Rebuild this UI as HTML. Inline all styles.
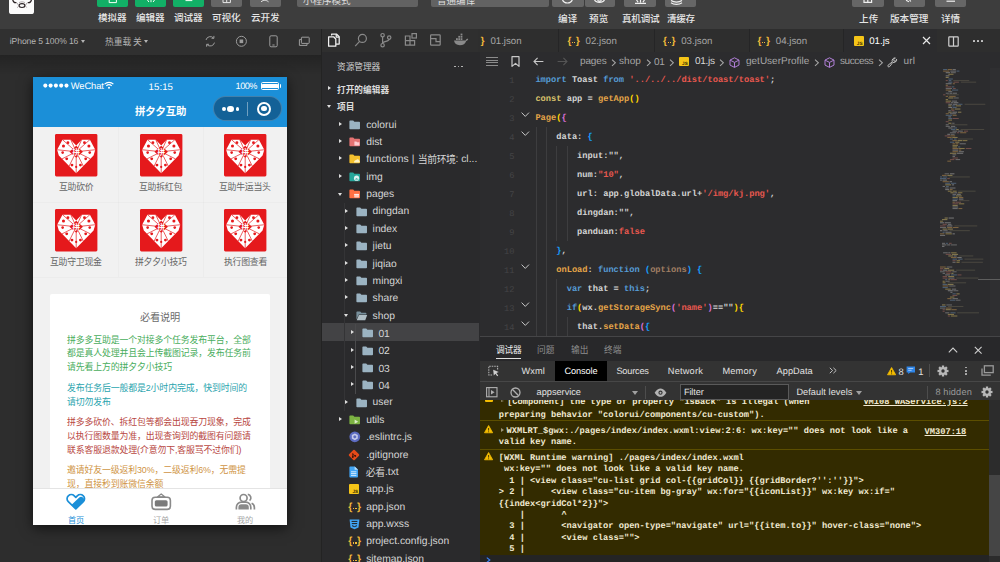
<!DOCTYPE html>
<html lang="zh"><head><meta charset="utf-8"><title>WeChat DevTools</title>
<style>
html,body{margin:0;padding:0;background:#2d2d2d;}
body{width:1000px;height:562px;overflow:hidden;position:relative;font-family:"Liberation Sans",sans-serif;}
#app{position:absolute;left:0;top:0;width:1000px;height:562px;overflow:hidden;background:#2d2d2d;}
#app div,#app span,#app svg{position:absolute;box-sizing:border-box;}
.t{font-family:"Liberation Sans",sans-serif;white-space:pre;text-rendering:geometricPrecision;}
.m{font-family:"Liberation Mono",monospace;white-space:pre;text-rendering:geometricPrecision;}
.c{overflow:visible;}
svg text{font-family:"Liberation Sans","Noto Sans CJK SC",sans-serif;}
</style></head><body><div id="app">
<div style="left:0px;top:0px;width:1000px;height:28.5px;background:#3d3d3d;"></div>
<div style="left:8.9px;top:-8px;width:25.3px;height:21.6px;background:#fbfbfb;border-radius:2.6px;"></div>
<svg class="c" style="left:11.6px;top:0px;width:20px;height:12px;" viewBox="0 0 20 12"><g fill="none" stroke="#2a2224" stroke-width="1.2" stroke-linecap="round"><path d="M.8 0c.4 1.800 1.600 2.800 3.200 2.600M19.400 0c-.4 1.800-1.600 2.800-3.200 2.600"/><ellipse cx="10" cy="5.600" rx="2.900" ry="1.900"/></g><g fill="none" stroke="#8d8488" stroke-width=".7" stroke-linecap="round"><path d="M5.200 3.200l1.800 2.800M14.800 3.200l-1.600 2.600M5.600 7.400l.8-1M14.400 7.200l-.6-.8M7.400 2.400c1.600-.8 3.600-.8 5.200 0"/></g></svg>
<div style="left:96.8px;top:-12px;width:31.7px;height:18.8px;background:#12b066;border-radius:2px;"></div>
<div style="left:134.8px;top:-12px;width:31.7px;height:18.8px;background:#12b066;border-radius:2px;"></div>
<div style="left:172.8px;top:-12px;width:31.7px;height:18.8px;background:#12b066;border-radius:2px;"></div>
<div style="left:210.8px;top:-12px;width:31.7px;height:18.8px;background:#666666;border-radius:2px;"></div>
<div style="left:249.6px;top:-12px;width:31.7px;height:18.8px;background:#666666;border-radius:2px;"></div>
<svg class="c" style="left:96.8px;top:0px;width:190px;height:7px;" viewBox="0 0 190 7"><g fill="none" stroke="#f4fff8" stroke-width="1"><path d="M12.2 0v2.6h7.2V0"/><path d="M50.5 0l1.400 2M54 0v2.200M57.500 0l-1.400 2"/><path d="M88.5 .6h6.8"/><path d="M126 0v2.600h7.400V0M129.700 0v2.600" stroke="#e8e8e8"/><path d="M164 1.800c2.500-2 5-2 7.500 0" stroke="#e8e8e8"/></g></svg>
<svg class="c" style="left:98.35px;top:11.46px;width:29.5px;height:12.48px;fill:#e6e6e6;" viewBox="0 -1030 3072.92 1300" role="img" aria-label="模拟器"><text x="-5.21" y="0" font-size="1000" font-weight="500" letter-spacing="-10.4">模拟器</text></svg>
<svg class="c" style="left:136.35px;top:11.46px;width:29.5px;height:12.48px;fill:#e6e6e6;" viewBox="0 -1030 3072.92 1300" role="img" aria-label="编辑器"><text x="-5.21" y="0" font-size="1000" font-weight="500" letter-spacing="-10.4">编辑器</text></svg>
<svg class="c" style="left:174.35px;top:11.46px;width:29.5px;height:12.48px;fill:#e6e6e6;" viewBox="0 -1030 3072.92 1300" role="img" aria-label="调试器"><text x="-5.21" y="0" font-size="1000" font-weight="500" letter-spacing="-10.4">调试器</text></svg>
<svg class="c" style="left:212.35px;top:11.46px;width:29.5px;height:12.48px;fill:#e6e6e6;" viewBox="0 -1030 3072.92 1300" role="img" aria-label="可视化"><text x="-5.21" y="0" font-size="1000" font-weight="500" letter-spacing="-10.4">可视化</text></svg>
<svg class="c" style="left:251.35px;top:11.46px;width:29.5px;height:12.48px;fill:#e6e6e6;" viewBox="0 -1030 3072.92 1300" role="img" aria-label="云开发"><text x="-5.21" y="0" font-size="1000" font-weight="500" letter-spacing="-10.4">云开发</text></svg>
<div style="left:297px;top:-12px;width:121px;height:18.8px;background:#626262;border-radius:2px;"></div>
<div style="left:431px;top:-12px;width:118px;height:18.8px;background:#626262;border-radius:2px;"></div>
<svg class="c" style="left:302.5px;top:-6.04px;width:48.5px;height:12.48px;fill:#dcdcdc;" viewBox="0 -1030 5052.08 1300" role="img" aria-label="小程序模式"><text x="-5.21" y="0" font-size="1000" letter-spacing="-10.4">小程序模式</text></svg>
<svg class="c" style="left:437px;top:-6.04px;width:39px;height:12.48px;fill:#dcdcdc;" viewBox="0 -1030 4062.5 1300" role="img" aria-label="普通编译"><text x="-5.21" y="0" font-size="1000" letter-spacing="-10.4">普通编译</text></svg>
<div style="left:551.5px;top:-12px;width:32.5px;height:18.8px;background:#666666;border-radius:2px;"></div>
<div style="left:584.6px;top:-12px;width:30.6px;height:18.8px;background:#666666;border-radius:2px;"></div>
<div style="left:624px;top:-12px;width:31.6px;height:18.8px;background:#666666;border-radius:2px;"></div>
<div style="left:665px;top:-12px;width:31.2px;height:18.8px;background:#666666;border-radius:2px;"></div>
<div style="left:852px;top:-12px;width:32px;height:18.8px;background:#666666;border-radius:2px;"></div>
<div style="left:894px;top:-12px;width:31.2px;height:18.8px;background:#666666;border-radius:2px;"></div>
<div style="left:935px;top:-12px;width:31.2px;height:18.8px;background:#666666;border-radius:2px;"></div>
<svg class="c" style="left:551px;top:0px;width:420px;height:7px;" viewBox="0 0 420 7"><g fill="none" stroke="#f0f0f0" stroke-width="1.2"><path d="M11.5 0c1.8 4 8 4 9.8 0"/><path d="M43.5 0c2 3.2 8 3.2 10 0M46.5 0c1 1.6 3 1.6 4 0"/><path d="M85.5 0l1.6 2.2M89.5 0v2.6M93.5 0l-1.6 2.2M84 3.4h11"/><path d="M120 .4c3 2.2 8 2.2 11 0M120 2.8c3 2.2 8 2.2 11 0"/><path d="M313 0v2.4h7.6V0M316.8 0v2.4"/><path d="M355 .3l3 1.5M358.6 0l1.2 1.5"/><path d="M395.5 1.2h8.5"/></g></svg>
<svg class="c" style="left:557.5px;top:11.66px;width:20.4px;height:12.48px;fill:#e6e6e6;" viewBox="0 -1030 2125 1300" role="img" aria-label="编译"><text x="5.21" y="0" font-size="1000" font-weight="500" letter-spacing="10.4">编译</text></svg>
<svg class="c" style="left:589.2px;top:11.66px;width:20.4px;height:12.48px;fill:#e6e6e6;" viewBox="0 -1030 2125 1300" role="img" aria-label="预览"><text x="5.21" y="0" font-size="1000" font-weight="500" letter-spacing="10.4">预览</text></svg>
<svg class="c" style="left:621.6px;top:11.66px;width:38.6px;height:12.48px;fill:#e6e6e6;" viewBox="0 -1030 4020.83 1300" role="img" aria-label="真机调试"><text x="-10.42" y="0" font-size="1000" font-weight="500" letter-spacing="-20.8">真机调试</text></svg>
<svg class="c" style="left:667.27px;top:11.66px;width:29.05px;height:12.48px;fill:#e6e6e6;" viewBox="0 -1030 3026.04 1300" role="img" aria-label="清缓存"><text x="-13.02" y="0" font-size="1000" font-weight="500" letter-spacing="-26">清缓存</text></svg>
<svg class="c" style="left:859.3px;top:11.66px;width:20.4px;height:12.48px;fill:#e6e6e6;" viewBox="0 -1030 2125 1300" role="img" aria-label="上传"><text x="5.21" y="0" font-size="1000" font-weight="500" letter-spacing="10.4">上传</text></svg>
<svg class="c" style="left:890.1px;top:11.66px;width:39.4px;height:12.48px;fill:#e6e6e6;" viewBox="0 -1030 4104.17 1300" role="img" aria-label="版本管理"><text x="0" y="0" font-size="1000" font-weight="500">版本管理</text></svg>
<svg class="c" style="left:941px;top:11.66px;width:20.2px;height:12.48px;fill:#e6e6e6;" viewBox="0 -1030 2104.17 1300" role="img" aria-label="详情"><text x="0" y="0" font-size="1000" font-weight="500">详情</text></svg>
<div style="left:0px;top:28.5px;width:1000px;height:23.7px;background:#2f2f2f;"></div>
<div style="left:0px;top:28.5px;width:321px;height:26px;background:#303030;"></div>
<span class="t" style="left:9.8px;top:35px;font-size:8.6px;line-height:12px;color:#b4b4b4;letter-spacing:-0.11px;">iPhone 5 100% 16</span>
<div style="left:81px;top:40.4px;width:0;height:0;border-left:2.4px solid transparent;border-right:2.4px solid transparent;border-top:3px solid #b4b4b4"></div>
<svg class="c" style="left:104.8px;top:35.88px;width:27.4px;height:11.44px;fill:#b4b4b4;" viewBox="0 -1030 3113.64 1300" role="img" aria-label="热重载"><text x="0" y="0" font-size="1000">热重载</text></svg>
<svg class="c" style="left:133px;top:35.88px;width:9.8px;height:11.44px;fill:#b4b4b4;" viewBox="0 -1030 1113.64 1300" role="img" aria-label="关"><text x="0" y="0" font-size="1000">关</text></svg>
<div style="left:144px;top:40.4px;width:0;height:0;border-left:2.4px solid transparent;border-right:2.4px solid transparent;border-top:3px solid #b4b4b4"></div>
<svg class="c" style="left:203px;top:33.6px;width:110px;height:15px;" viewBox="0 0 110 15"><g fill="none" stroke="#9c9c9c" stroke-width="1"><path d="M3 6a4.400 4.400 0 0 1 7.600-1.900M11.500 8.600a4.400 4.400 0 0 1-7.600 1.900"/><path d="M10.900 1.900v2.400H8.500M3.600 12.700v-2.400H6"/><circle cx="38.400" cy="7.300" r="5"/><rect x="66.800" y="1.800" width="7.400" height="11" rx="1.300"/><path d="M69.400 11h2.200"/><path d="M98.400 5.600h-2v5.800h7.600V9.800"/><rect x="98.400" y="3.200" width="7.800" height="6.200" rx=".6"/></g><rect x="36.600" y="5.500" width="3.600" height="3.600" fill="#9c9c9c"/></svg>
<div style="left:320.8px;top:28.5px;width:1.2px;height:534px;background:#232323;"></div>
<div style="left:0px;top:54.5px;width:320.8px;height:20px;background:linear-gradient(rgba(0,0,0,.22),rgba(0,0,0,0));"></div>
<div style="left:33.2px;top:76.6px;width:254px;height:448.8px;background:#f1f1f1;box-shadow:0 3px 12px rgba(0,0,0,.62);"></div>
<div style="left:33.2px;top:76.6px;width:254px;height:50.5px;background:#1b8fd8;"></div>
<svg class="c" style="left:42.6px;top:83.3px;width:27px;height:5.2px;" viewBox="0 0 27 5.2"><circle cx="2.3" cy="2.600" r="2.050" fill="#fff"/><circle cx="7.6" cy="2.600" r="2.050" fill="#fff"/><circle cx="12.899999999999999" cy="2.600" r="2.050" fill="#fff"/><circle cx="18.2" cy="2.600" r="2.050" fill="#fff"/><circle cx="23.5" cy="2.600" r="2.050" fill="#fff"/></svg>
<span class="t" style="left:70.8px;top:79px;font-size:9.4px;line-height:13px;color:#fff;letter-spacing:-0.13px;">WeChat</span>
<svg class="c" style="left:104.4px;top:81.4px;width:10px;height:8px;" viewBox="0 0 10 8"><g fill="none" stroke="#fff" stroke-width="1.15"><path d="M.6 3.1a6.3 6.3 0 0 1 8.800 0M2.300 4.900a3.900 3.900 0 0 1 5.400 0"/></g><circle cx="5" cy="6.700" r="1" fill="#fff"/></svg>
<span class="t" style="left:148.55px;top:81px;font-size:9.6px;line-height:13px;color:#fff;letter-spacing:0.1px;">15:15</span>
<span class="t" style="left:235.6px;top:80px;font-size:9.2px;line-height:13px;color:#fff;letter-spacing:-0.53px;">100%</span>
<div style="left:260.6px;top:82.2px;width:18.6px;height:7.6px;border:1px solid #fff;border-radius:1.6px;"></div>
<div style="left:262px;top:83.6px;width:15.8px;height:4.8px;background:#fff;border-radius:.6px;"></div>
<div style="left:279.8px;top:84.4px;width:1.4px;height:3.2px;background:#fff;border-radius:0 1px 1px 0;"></div>
<svg class="c" style="left:134.65px;top:104.34px;width:52.5px;height:13.52px;fill:#fff;" viewBox="0 -1030 5048.08 1300" role="img" aria-label="拼夕夕互助"><text x="-4.81" y="0" font-size="1000" font-weight="700" letter-spacing="-9.6">拼夕夕互助</text></svg>
<div style="left:213.2px;top:96.4px;width:69.2px;height:24.8px;background:rgba(14,60,100,.56);border-radius:12.4px;border:0.6px solid rgba(255,255,255,.2);"></div>
<div style="left:246.6px;top:101.6px;width:0.7px;height:14.6px;background:rgba(255,255,255,.4);"></div>
<div style="left:221.8px;top:107px;width:3.8px;height:3.8px;background:#fff;border-radius:50%;"></div>
<div style="left:227.4px;top:105.6px;width:6.6px;height:6.6px;background:#fff;border-radius:50%;"></div>
<div style="left:235.6px;top:107px;width:3.8px;height:3.8px;background:#fff;border-radius:50%;"></div>
<div style="left:256.9px;top:101.8px;width:14.2px;height:14.2px;border:2.5px solid #fff;border-radius:50%;"></div>
<div style="left:261.4px;top:106.3px;width:5.2px;height:5.2px;background:#fff;border-radius:50%;"></div>
<div style="left:117.87px;top:127.2px;width:0.6px;height:150px;background:rgba(0,0,0,.018);"></div>
<div style="left:202.53px;top:127.2px;width:0.6px;height:150px;background:rgba(0,0,0,.018);"></div>
<div style="left:33.2px;top:202px;width:254px;height:0.6px;background:rgba(0,0,0,.018);"></div>
<div style="left:33.2px;top:277px;width:254px;height:0.6px;background:rgba(0,0,0,.018);"></div>
<svg class="c" style="left:54.93px;top:133.8px;width:42.4px;height:42.4px;" viewBox="0 0 42 42"><rect width="42" height="42" rx="1.400" fill="#e5191c"/><polygon points="2.1,15.6 7.4,5.6 15.6,5.6 21,11.4 26.4,5.6 34.6,5.6 39.9,15.6 38.2,21.4 21,39 3.8,21.4" fill="#fff"/><path d="M21 17.6L2.1 15.6M21 17.6L7.4 5.6M21 17.6L15.6 5.6M21 17.6L26.4 5.6M21 17.6L34.6 5.6M21 17.6L39.9 15.6M21 17.6L35 24.6M21 17.6L28 31.8M21 17.6L21 39M21 17.6L14 31.8M21 17.6L7 24.6" stroke="#e5191c" stroke-width=".7" fill="none"/><g fill="#e5191c"><circle cx="8.4" cy="11.8" r="1.5"/><circle cx="12.8" cy="8.6" r="1.4"/><circle cx="29.2" cy="8.6" r="1.4"/><circle cx="33.6" cy="11.8" r="1.5"/><circle cx="7.6" cy="18.4" r="1.3"/><circle cx="34.4" cy="18.4" r="1.3"/><circle cx="11.6" cy="24.6" r="1.4"/><circle cx="30.4" cy="24.6" r="1.4"/><circle cx="16.8" cy="30.8" r="1.4"/><circle cx="25.2" cy="30.8" r="1.4"/><circle cx="21" cy="32.6" r="1.1"/><polygon points="21,11.700000000000001 27.7,17.6 21,23.5 14.3,17.6"/></g><text x="17.1" y="20.6" font-size="7.8" font-weight="700" fill="#fff">拼</text></svg>
<svg class="c" style="left:58.71px;top:180.72px;width:35.64px;height:11.57px;fill:#666;" viewBox="0 -1030 4004.49 1300" role="img" aria-label="互助砍价"><text x="-13.48" y="0" font-size="1000" letter-spacing="-27">互助砍价</text></svg>
<svg class="c" style="left:139.6px;top:133.8px;width:42.4px;height:42.4px;" viewBox="0 0 42 42"><rect width="42" height="42" rx="1.400" fill="#e5191c"/><polygon points="2.1,15.6 7.4,5.6 15.6,5.6 21,11.4 26.4,5.6 34.6,5.6 39.9,15.6 38.2,21.4 21,39 3.8,21.4" fill="#fff"/><path d="M21 17.6L2.1 15.6M21 17.6L7.4 5.6M21 17.6L15.6 5.6M21 17.6L26.4 5.6M21 17.6L34.6 5.6M21 17.6L39.9 15.6M21 17.6L35 24.6M21 17.6L28 31.8M21 17.6L21 39M21 17.6L14 31.8M21 17.6L7 24.6" stroke="#e5191c" stroke-width=".7" fill="none"/><g fill="#e5191c"><circle cx="8.4" cy="11.8" r="1.5"/><circle cx="12.8" cy="8.6" r="1.4"/><circle cx="29.2" cy="8.6" r="1.4"/><circle cx="33.6" cy="11.8" r="1.5"/><circle cx="7.6" cy="18.4" r="1.3"/><circle cx="34.4" cy="18.4" r="1.3"/><circle cx="11.6" cy="24.6" r="1.4"/><circle cx="30.4" cy="24.6" r="1.4"/><circle cx="16.8" cy="30.8" r="1.4"/><circle cx="25.2" cy="30.8" r="1.4"/><circle cx="21" cy="32.6" r="1.1"/><polygon points="21,11.700000000000001 27.7,17.6 21,23.5 14.3,17.6"/></g><text x="17.1" y="20.6" font-size="7.8" font-weight="700" fill="#fff">拼</text></svg>
<svg class="c" style="left:139.05px;top:180.72px;width:44.3px;height:11.57px;fill:#666;" viewBox="0 -1030 4977.53 1300" role="img" aria-label="互助拆红包"><text x="-13.48" y="0" font-size="1000" letter-spacing="-27">互助拆红包</text></svg>
<svg class="c" style="left:224.27px;top:133.8px;width:42.4px;height:42.4px;" viewBox="0 0 42 42"><rect width="42" height="42" rx="1.400" fill="#e5191c"/><polygon points="2.1,15.6 7.4,5.6 15.6,5.6 21,11.4 26.4,5.6 34.6,5.6 39.9,15.6 38.2,21.4 21,39 3.8,21.4" fill="#fff"/><path d="M21 17.6L2.1 15.6M21 17.6L7.4 5.6M21 17.6L15.6 5.6M21 17.6L26.4 5.6M21 17.6L34.6 5.6M21 17.6L39.9 15.6M21 17.6L35 24.6M21 17.6L28 31.8M21 17.6L21 39M21 17.6L14 31.8M21 17.6L7 24.6" stroke="#e5191c" stroke-width=".7" fill="none"/><g fill="#e5191c"><circle cx="8.4" cy="11.8" r="1.5"/><circle cx="12.8" cy="8.6" r="1.4"/><circle cx="29.2" cy="8.6" r="1.4"/><circle cx="33.6" cy="11.8" r="1.5"/><circle cx="7.6" cy="18.4" r="1.3"/><circle cx="34.4" cy="18.4" r="1.3"/><circle cx="11.6" cy="24.6" r="1.4"/><circle cx="30.4" cy="24.6" r="1.4"/><circle cx="16.8" cy="30.8" r="1.4"/><circle cx="25.2" cy="30.8" r="1.4"/><circle cx="21" cy="32.6" r="1.1"/><polygon points="21,11.700000000000001 27.7,17.6 21,23.5 14.3,17.6"/></g><text x="17.1" y="20.6" font-size="7.8" font-weight="700" fill="#fff">拼</text></svg>
<svg class="c" style="left:219.39px;top:180.72px;width:52.96px;height:11.57px;fill:#666;" viewBox="0 -1030 5950.56 1300" role="img" aria-label="互助牛运当头"><text x="-13.48" y="0" font-size="1000" letter-spacing="-27">互助牛运当头</text></svg>
<svg class="c" style="left:54.93px;top:208.8px;width:42.4px;height:42.4px;" viewBox="0 0 42 42"><rect width="42" height="42" rx="1.400" fill="#e5191c"/><polygon points="2.1,15.6 7.4,5.6 15.6,5.6 21,11.4 26.4,5.6 34.6,5.6 39.9,15.6 38.2,21.4 21,39 3.8,21.4" fill="#fff"/><path d="M21 17.6L2.1 15.6M21 17.6L7.4 5.6M21 17.6L15.6 5.6M21 17.6L26.4 5.6M21 17.6L34.6 5.6M21 17.6L39.9 15.6M21 17.6L35 24.6M21 17.6L28 31.8M21 17.6L21 39M21 17.6L14 31.8M21 17.6L7 24.6" stroke="#e5191c" stroke-width=".7" fill="none"/><g fill="#e5191c"><circle cx="8.4" cy="11.8" r="1.5"/><circle cx="12.8" cy="8.6" r="1.4"/><circle cx="29.2" cy="8.6" r="1.4"/><circle cx="33.6" cy="11.8" r="1.5"/><circle cx="7.6" cy="18.4" r="1.3"/><circle cx="34.4" cy="18.4" r="1.3"/><circle cx="11.6" cy="24.6" r="1.4"/><circle cx="30.4" cy="24.6" r="1.4"/><circle cx="16.8" cy="30.8" r="1.4"/><circle cx="25.2" cy="30.8" r="1.4"/><circle cx="21" cy="32.6" r="1.1"/><polygon points="21,11.700000000000001 27.7,17.6 21,23.5 14.3,17.6"/></g><text x="17.1" y="20.6" font-size="7.8" font-weight="700" fill="#fff">拼</text></svg>
<svg class="c" style="left:50.05px;top:255.72px;width:52.96px;height:11.57px;fill:#666;" viewBox="0 -1030 5950.56 1300" role="img" aria-label="互助守卫现金"><text x="-13.48" y="0" font-size="1000" letter-spacing="-27">互助守卫现金</text></svg>
<svg class="c" style="left:139.6px;top:208.8px;width:42.4px;height:42.4px;" viewBox="0 0 42 42"><rect width="42" height="42" rx="1.400" fill="#e5191c"/><polygon points="2.1,15.6 7.4,5.6 15.6,5.6 21,11.4 26.4,5.6 34.6,5.6 39.9,15.6 38.2,21.4 21,39 3.8,21.4" fill="#fff"/><path d="M21 17.6L2.1 15.6M21 17.6L7.4 5.6M21 17.6L15.6 5.6M21 17.6L26.4 5.6M21 17.6L34.6 5.6M21 17.6L39.9 15.6M21 17.6L35 24.6M21 17.6L28 31.8M21 17.6L21 39M21 17.6L14 31.8M21 17.6L7 24.6" stroke="#e5191c" stroke-width=".7" fill="none"/><g fill="#e5191c"><circle cx="8.4" cy="11.8" r="1.5"/><circle cx="12.8" cy="8.6" r="1.4"/><circle cx="29.2" cy="8.6" r="1.4"/><circle cx="33.6" cy="11.8" r="1.5"/><circle cx="7.6" cy="18.4" r="1.3"/><circle cx="34.4" cy="18.4" r="1.3"/><circle cx="11.6" cy="24.6" r="1.4"/><circle cx="30.4" cy="24.6" r="1.4"/><circle cx="16.8" cy="30.8" r="1.4"/><circle cx="25.2" cy="30.8" r="1.4"/><circle cx="21" cy="32.6" r="1.1"/><polygon points="21,11.700000000000001 27.7,17.6 21,23.5 14.3,17.6"/></g><text x="17.1" y="20.6" font-size="7.8" font-weight="700" fill="#fff">拼</text></svg>
<svg class="c" style="left:134.72px;top:255.72px;width:52.96px;height:11.57px;fill:#666;" viewBox="0 -1030 5950.56 1300" role="img" aria-label="拼夕夕小技巧"><text x="-13.48" y="0" font-size="1000" letter-spacing="-27">拼夕夕小技巧</text></svg>
<svg class="c" style="left:224.27px;top:208.8px;width:42.4px;height:42.4px;" viewBox="0 0 42 42"><rect width="42" height="42" rx="1.400" fill="#e5191c"/><polygon points="2.1,15.6 7.4,5.6 15.6,5.6 21,11.4 26.4,5.6 34.6,5.6 39.9,15.6 38.2,21.4 21,39 3.8,21.4" fill="#fff"/><path d="M21 17.6L2.1 15.6M21 17.6L7.4 5.6M21 17.6L15.6 5.6M21 17.6L26.4 5.6M21 17.6L34.6 5.6M21 17.6L39.9 15.6M21 17.6L35 24.6M21 17.6L28 31.8M21 17.6L21 39M21 17.6L14 31.8M21 17.6L7 24.6" stroke="#e5191c" stroke-width=".7" fill="none"/><g fill="#e5191c"><circle cx="8.4" cy="11.8" r="1.5"/><circle cx="12.8" cy="8.6" r="1.4"/><circle cx="29.2" cy="8.6" r="1.4"/><circle cx="33.6" cy="11.8" r="1.5"/><circle cx="7.6" cy="18.4" r="1.3"/><circle cx="34.4" cy="18.4" r="1.3"/><circle cx="11.6" cy="24.6" r="1.4"/><circle cx="30.4" cy="24.6" r="1.4"/><circle cx="16.8" cy="30.8" r="1.4"/><circle cx="25.2" cy="30.8" r="1.4"/><circle cx="21" cy="32.6" r="1.1"/><polygon points="21,11.700000000000001 27.7,17.6 21,23.5 14.3,17.6"/></g><text x="17.1" y="20.6" font-size="7.8" font-weight="700" fill="#fff">拼</text></svg>
<svg class="c" style="left:223.72px;top:255.72px;width:44.3px;height:11.57px;fill:#666;" viewBox="0 -1030 4977.53 1300" role="img" aria-label="执行图查看"><text x="-13.48" y="0" font-size="1000" letter-spacing="-27">执行图查看</text></svg>
<div style="left:50.4px;top:294px;width:219.4px;height:200px;background:#fff;border-radius:2px;"></div>
<svg class="c" style="left:140.3px;top:311.27px;width:41.2px;height:13.26px;fill:#6b6b6b;" viewBox="0 -1030 4039.22 1300" role="img" aria-label="必看说明"><text x="-7.35" y="0" font-size="1000" letter-spacing="-14.7">必看说明</text></svg>
<svg class="c" style="left:66.6px;top:333.82px;width:185.38px;height:11.57px;fill:#48ad5c;" viewBox="0 -1030 20829.21 1300" role="img" aria-label="拼多多互助是一个对接多个任务发布平台，全部"><text x="-6.74" y="0" font-size="1000" letter-spacing="-13.5">拼多多互助是一个对接多个任务发布平台，全部</text></svg>
<svg class="c" style="left:66.6px;top:347.42px;width:185.38px;height:11.57px;fill:#48ad5c;" viewBox="0 -1030 20829.21 1300" role="img" aria-label="都是真人处理并且会上传截图记录，发布任务前"><text x="-6.74" y="0" font-size="1000" letter-spacing="-13.5">都是真人处理并且会上传截图记录，发布任务前</text></svg>
<svg class="c" style="left:66.6px;top:361.22px;width:106.36px;height:11.57px;fill:#48ad5c;" viewBox="0 -1030 11950.56 1300" role="img" aria-label="请先看上方的拼夕夕小技巧"><text x="-6.74" y="0" font-size="1000" letter-spacing="-13.5">请先看上方的拼夕夕小技巧</text></svg>
<svg class="c" style="left:66.6px;top:381.52px;width:181.47px;height:11.57px;fill:#2aa4ae;" viewBox="0 -1030 20390.21 1300" role="img" aria-label="发布任务后一般都是2小时内完成，快到时间的"><text x="-6.74" y="0" font-size="1000" letter-spacing="-13.5">发布任务后一般都是2小时内完成，快到时间的</text></svg>
<svg class="c" style="left:66.6px;top:396.02px;width:44.9px;height:11.57px;fill:#2aa4ae;" viewBox="0 -1030 5044.94 1300" role="img" aria-label="请切勿发布"><text x="-6.74" y="0" font-size="1000" letter-spacing="-13.5">请切勿发布</text></svg>
<svg class="c" style="left:66.6px;top:416.02px;width:185.38px;height:11.57px;fill:#b8473f;" viewBox="0 -1030 20829.21 1300" role="img" aria-label="拼多多砍价、拆红包等都会出现吞刀现象，完成"><text x="-6.74" y="0" font-size="1000" letter-spacing="-13.5">拼多多砍价、拆红包等都会出现吞刀现象，完成</text></svg>
<svg class="c" style="left:66.6px;top:430.02px;width:185.38px;height:11.57px;fill:#b8473f;" viewBox="0 -1030 20829.21 1300" role="img" aria-label="以执行图数量为准，出现查询到的截图有问题请"><text x="-6.74" y="0" font-size="1000" letter-spacing="-13.5">以执行图数量为准，出现查询到的截图有问题请</text></svg>
<svg class="c" style="left:66.6px;top:444.02px;width:176.2px;height:11.57px;fill:#b8473f;" viewBox="0 -1030 19797.32 1300" role="img" aria-label="联系客服退款处理(介意勿下,客服骂不过你们)"><text x="-6.74" y="0" font-size="1000" letter-spacing="-13.5">联系客服退款处理(介意勿下,客服骂不过你们)</text></svg>
<svg class="c" style="left:66.6px;top:463.82px;width:181.05px;height:11.57px;fill:#cf9444;" viewBox="0 -1030 20342.86 1300" role="img" aria-label="邀请好友一级返利30%，二级返利6%，无需提"><text x="-6.74" y="0" font-size="1000" letter-spacing="-13.5">邀请好友一级返利30%，二级返利6%，无需提</text></svg>
<svg class="c" style="left:66.6px;top:477.72px;width:97.58px;height:11.57px;fill:#cf9444;" viewBox="0 -1030 10964.04 1300" role="img" aria-label="现，直接秒到账微信余额"><text x="-6.74" y="0" font-size="1000" letter-spacing="-13.5">现，直接秒到账微信余额</text></svg>
<div style="left:33.2px;top:487.8px;width:254px;height:37.6px;background:#fff;border-top:0.6px solid #e4e4e4;"></div>
<svg class="c" style="left:65.8px;top:494.4px;width:19.6px;height:16.2px;" viewBox="0 0 19.600 16.200"><path d="M9.800 14.800L2.300 7.700a4 4 0 0 1 0-5.800 4.300 4.300 0 0 1 6 0l1.500 1.500 1.500-1.500a4.300 4.300 0 0 1 6 0 4 4 0 0 1 0 5.800z" fill="none" stroke="#1b8fd8" stroke-width="1.700" stroke-linejoin="round"/><path d="M5.600 10.800l7.400-7.100a3 3 0 0 1 4.200 0 3 3 0 0 1 0 4.300l-7.400 7.100z" fill="#1b8fd8"/></svg>
<svg class="c" style="left:150.6px;top:493.4px;width:20.4px;height:17.4px;" viewBox="0 0 20.4 17.4"><rect x="1" y="4.200" width="18.400" height="12.200" rx="3.200" fill="none" stroke="#8a8a8a" stroke-width="1.600"/><rect x="3.800" y="7.200" width="12.800" height="6.400" rx="1.600" fill="#7a7a7a"/><path d="M6.400 4l3.800-3 3.800 3z" fill="none" stroke="#8a8a8a" stroke-width="1.300" stroke-linejoin="round"/></svg>
<svg class="c" style="left:234.6px;top:493.4px;width:20.4px;height:17.4px;" viewBox="0 0 20.4 17.4"><g fill="none" stroke="#8a8a8a" stroke-width="1.7"><circle cx="8.6" cy="5" r="3.5"/><path d="M1.4 16.4v-2.2a5 5 0 0 1 5-5h4.4a5 5 0 0 1 5 5v2.2"/><path d="M12.8 1.4a3.5 3.5 0 0 1 1.8 6.2M16.6 10.2a4.6 4.6 0 0 1 2.8 4.2v2"/></g><path d="M3.4 16.6v-2.4a3 3 0 0 1 3-3h4.4a3 3 0 0 1 3 3v2.4z" fill="#8a8a8a"/></svg>
<svg class="c" style="left:67.6px;top:515.07px;width:17.2px;height:10.66px;fill:#1b8fd8;" viewBox="0 -1030 2097.56 1300" role="img" aria-label="首页"><text x="-6.1" y="0" font-size="1000" letter-spacing="-12.2">首页</text></svg>
<svg class="c" style="left:152.7px;top:515.07px;width:17.2px;height:10.66px;fill:#a8a8a8;" viewBox="0 -1030 2097.56 1300" role="img" aria-label="订单"><text x="-6.1" y="0" font-size="1000" letter-spacing="-12.2">订单</text></svg>
<svg class="c" style="left:236.6px;top:515.07px;width:17.2px;height:10.66px;fill:#a8a8a8;" viewBox="0 -1030 2097.56 1300" role="img" aria-label="我的"><text x="-6.1" y="0" font-size="1000" letter-spacing="-12.2">我的</text></svg>
<div style="left:322px;top:52.2px;width:158px;height:510px;background:#2a2a2c;"></div>
<svg class="c" style="left:337.4px;top:61.05px;width:44.3px;height:11.31px;fill:#d2d2d2;" viewBox="0 -1030 5091.95 1300" role="img" aria-label="资源管理器"><text x="-2.3" y="0" font-size="1000" letter-spacing="-4.6">资源管理器</text></svg>
<div style="left:454.2px;top:65.6px;width:1.5px;height:1.5px;background:#c8c8c8;border-radius:50%;"></div>
<div style="left:457.8px;top:65.6px;width:1.5px;height:1.5px;background:#c8c8c8;border-radius:50%;"></div>
<div style="left:461.4px;top:65.6px;width:1.5px;height:1.5px;background:#c8c8c8;border-radius:50%;"></div>
<div style="left:327.9px;top:86.3px;width:0;height:0;border-top:2.9px solid transparent;border-bottom:2.9px solid transparent;border-left:3.6px solid #dedede"></div>
<svg class="c" style="left:337.4px;top:83.55px;width:53.2px;height:11.31px;fill:#dcdcdc;" viewBox="0 -1030 6114.94 1300" role="img" aria-label="打开的编辑器"><text x="0" y="0" font-size="1000" font-weight="700">打开的编辑器</text></svg>
<div style="left:326.5px;top:105.4px;width:0;height:0;border-left:2.9px solid transparent;border-right:2.9px solid transparent;border-top:3.6px solid #dedede"></div>
<svg class="c" style="left:337.4px;top:101.14px;width:18.4px;height:11.31px;fill:#dcdcdc;" viewBox="0 -1030 2114.94 1300" role="img" aria-label="项目"><text x="0" y="0" font-size="1000" font-weight="700">项目</text></svg>
<div style="left:322px;top:323px;width:157.4px;height:18.2px;background:#434345;"></div>
<div style="left:343.6px;top:202.76px;width:0.7px;height:208.44px;background:#343436;"></div>
<div style="left:355.2px;top:324.35px;width:0.7px;height:69.48px;background:#4a4a4c;"></div>
<div style="left:338.9px;top:121.7px;width:0;height:0;border-top:2.9px solid transparent;border-bottom:2.9px solid transparent;border-left:3.6px solid #dedede"></div>
<svg class="c" style="left:348.8px;top:119.7px;width:11.4px;height:9.4px;" viewBox="0 0 11.4 9.4"><path d="M.4 1.2a.8.8 0 0 1 .8-.8h3l1.2 1.3h4.8a.8.8 0 0 1 .8.8v5.9a.8.8 0 0 1-.8.8H1.2a.8.8 0 0 1-.8-.8z" fill="#9bb3c2"/></svg>
<span class="t" style="left:366.2px;top:119px;font-size:10.3px;line-height:14px;color:#d6d6d6;">colorui</span>
<div style="left:338.9px;top:139.07px;width:0;height:0;border-top:2.9px solid transparent;border-bottom:2.9px solid transparent;border-left:3.6px solid #dedede"></div>
<svg class="c" style="left:348.8px;top:137.07px;width:11.4px;height:9.4px;" viewBox="0 0 11.4 9.4"><path d="M.4 1.2a.8.8 0 0 1 .8-.8h3l1.2 1.3h4.8a.8.8 0 0 1 .8.8v5.9a.8.8 0 0 1-.8.8H1.2a.8.8 0 0 1-.8-.8z" fill="#e57373"/><path d="M5.4 4.4h1.9l.8.8h2.3v3.4h-5z" fill="#ffcdd2"/></svg>
<span class="t" style="left:366.2px;top:136px;font-size:10.3px;line-height:14px;color:#d6d6d6;">dist</span>
<div style="left:338.9px;top:156.44px;width:0;height:0;border-top:2.9px solid transparent;border-bottom:2.9px solid transparent;border-left:3.6px solid #dedede"></div>
<svg class="c" style="left:348.8px;top:154.44px;width:11.4px;height:9.4px;" viewBox="0 0 11.4 9.4"><path d="M.4 1.2a.8.8 0 0 1 .8-.8h3l1.2 1.3h4.8a.8.8 0 0 1 .8.8v5.9a.8.8 0 0 1-.8.8H1.2a.8.8 0 0 1-.8-.8z" fill="#f5c12e"/><path d="M5 8.6c0-1.7 1-2.6 2.2-2.6.5-1 2.6-1 2.9.5.9.1.9 2.1 0 2.1z" fill="#fff3c4"/></svg>
<span class="t" style="left:366.2px;top:153px;font-size:10.3px;line-height:14px;color:#d6d6d6;letter-spacing:0.16px;">functions | </span>
<svg class="c" style="left:417.7px;top:152.91px;width:38.8px;height:12.87px;fill:#d6d6d6;" viewBox="0 -1030 3919.19 1300" role="img" aria-label="当前环境"><text x="-22.73" y="0" font-size="1000" letter-spacing="-45.5">当前环境</text></svg>
<span class="t" style="left:455.5px;top:153px;font-size:10.3px;line-height:14px;color:#d6d6d6;">: cl...</span>
<div style="left:338.9px;top:173.81px;width:0;height:0;border-top:2.9px solid transparent;border-bottom:2.9px solid transparent;border-left:3.6px solid #dedede"></div>
<svg class="c" style="left:348.8px;top:171.81px;width:11.4px;height:9.4px;" viewBox="0 0 11.4 9.4"><path d="M.4 1.2a.8.8 0 0 1 .8-.8h3l1.2 1.3h4.8a.8.8 0 0 1 .8.8v5.9a.8.8 0 0 1-.8.8H1.2a.8.8 0 0 1-.8-.8z" fill="#26a69a"/><circle cx="7.6" cy="6.2" r="2.6" fill="#e0f2f1"/><path d="M6 7.6l1.3-1.7 1 1.1.6-.6.9 1.2z" fill="#26a69a"/></svg>
<span class="t" style="left:366.2px;top:171px;font-size:10.3px;line-height:14px;color:#d6d6d6;">img</span>
<div style="left:337.5px;top:192.68px;width:0;height:0;border-left:2.9px solid transparent;border-right:2.9px solid transparent;border-top:3.6px solid #dedede"></div>
<svg class="c" style="left:348.8px;top:189.18px;width:11.4px;height:9.4px;" viewBox="0 0 11.4 9.4"><path d="M.4 1.2a.8.8 0 0 1 .8-.8h3l1.2 1.3h4.8a.8.8 0 0 1 .8.8v5.9a.8.8 0 0 1-.8.8H1.2a.8.8 0 0 1-.8-.8z" fill="#ff7043"/><rect x="5.2" y="4.9" width="4.8" height="3.6" rx=".4" fill="#ffccbc"/><rect x="5.2" y="4.9" width="4.8" height="1.1" fill="#fbe9e7"/></svg>
<span class="t" style="left:366.2px;top:188px;font-size:10.3px;line-height:14px;color:#d6d6d6;">pages</span>
<div style="left:345.1px;top:208.55px;width:0;height:0;border-top:2.9px solid transparent;border-bottom:2.9px solid transparent;border-left:3.6px solid #dedede"></div>
<svg class="c" style="left:355.6px;top:206.55px;width:11.4px;height:9.4px;" viewBox="0 0 11.4 9.4"><path d="M.4 1.2a.8.8 0 0 1 .8-.8h3l1.2 1.3h4.8a.8.8 0 0 1 .8.8v5.9a.8.8 0 0 1-.8.8H1.2a.8.8 0 0 1-.8-.8z" fill="#9bb3c2"/></svg>
<span class="t" style="left:372.6px;top:205px;font-size:10.3px;line-height:14px;color:#d6d6d6;">dingdan</span>
<div style="left:345.1px;top:225.92px;width:0;height:0;border-top:2.9px solid transparent;border-bottom:2.9px solid transparent;border-left:3.6px solid #dedede"></div>
<svg class="c" style="left:355.6px;top:223.92px;width:11.4px;height:9.4px;" viewBox="0 0 11.4 9.4"><path d="M.4 1.2a.8.8 0 0 1 .8-.8h3l1.2 1.3h4.8a.8.8 0 0 1 .8.8v5.9a.8.8 0 0 1-.8.8H1.2a.8.8 0 0 1-.8-.8z" fill="#9bb3c2"/></svg>
<span class="t" style="left:372.6px;top:223px;font-size:10.3px;line-height:14px;color:#d6d6d6;">index</span>
<div style="left:345.1px;top:243.29px;width:0;height:0;border-top:2.9px solid transparent;border-bottom:2.9px solid transparent;border-left:3.6px solid #dedede"></div>
<svg class="c" style="left:355.6px;top:241.29px;width:11.4px;height:9.4px;" viewBox="0 0 11.4 9.4"><path d="M.4 1.2a.8.8 0 0 1 .8-.8h3l1.2 1.3h4.8a.8.8 0 0 1 .8.8v5.9a.8.8 0 0 1-.8.8H1.2a.8.8 0 0 1-.8-.8z" fill="#9bb3c2"/></svg>
<span class="t" style="left:372.6px;top:240px;font-size:10.3px;line-height:14px;color:#d6d6d6;">jietu</span>
<div style="left:345.1px;top:260.66px;width:0;height:0;border-top:2.9px solid transparent;border-bottom:2.9px solid transparent;border-left:3.6px solid #dedede"></div>
<svg class="c" style="left:355.6px;top:258.66px;width:11.4px;height:9.4px;" viewBox="0 0 11.4 9.4"><path d="M.4 1.2a.8.8 0 0 1 .8-.8h3l1.2 1.3h4.8a.8.8 0 0 1 .8.8v5.9a.8.8 0 0 1-.8.8H1.2a.8.8 0 0 1-.8-.8z" fill="#9bb3c2"/></svg>
<span class="t" style="left:372.6px;top:258px;font-size:10.3px;line-height:14px;color:#d6d6d6;">jiqiao</span>
<div style="left:345.1px;top:278.03px;width:0;height:0;border-top:2.9px solid transparent;border-bottom:2.9px solid transparent;border-left:3.6px solid #dedede"></div>
<svg class="c" style="left:355.6px;top:276.03px;width:11.4px;height:9.4px;" viewBox="0 0 11.4 9.4"><path d="M.4 1.2a.8.8 0 0 1 .8-.8h3l1.2 1.3h4.8a.8.8 0 0 1 .8.8v5.9a.8.8 0 0 1-.8.8H1.2a.8.8 0 0 1-.8-.8z" fill="#9bb3c2"/></svg>
<span class="t" style="left:372.6px;top:275px;font-size:10.3px;line-height:14px;color:#d6d6d6;">mingxi</span>
<div style="left:345.1px;top:295.4px;width:0;height:0;border-top:2.9px solid transparent;border-bottom:2.9px solid transparent;border-left:3.6px solid #dedede"></div>
<svg class="c" style="left:355.6px;top:293.4px;width:11.4px;height:9.4px;" viewBox="0 0 11.4 9.4"><path d="M.4 1.2a.8.8 0 0 1 .8-.8h3l1.2 1.3h4.8a.8.8 0 0 1 .8.8v5.9a.8.8 0 0 1-.8.8H1.2a.8.8 0 0 1-.8-.8z" fill="#9bb3c2"/></svg>
<span class="t" style="left:372.6px;top:292px;font-size:10.3px;line-height:14px;color:#d6d6d6;">share</span>
<div style="left:343.7px;top:314.27px;width:0;height:0;border-left:2.9px solid transparent;border-right:2.9px solid transparent;border-top:3.6px solid #dedede"></div>
<svg class="c" style="left:355.6px;top:310.77px;width:11.4px;height:9.4px;" viewBox="0 0 11.4 9.4"><path d="M.4 1.2a.8.8 0 0 1 .8-.8h3l1.2 1.3h4.2a.8.8 0 0 1 .8.8v1h-7.6l-2.4 5z" fill="#78909c"/><path d="M2.9 3.9h8.3l-2 5.3H.7z" fill="#b0bec5"/></svg>
<span class="t" style="left:372.6px;top:310px;font-size:10.3px;line-height:14px;color:#d6d6d6;">shop</span>
<div style="left:350.9px;top:330.14px;width:0;height:0;border-top:2.9px solid transparent;border-bottom:2.9px solid transparent;border-left:3.6px solid #dedede"></div>
<svg class="c" style="left:361.6px;top:328.14px;width:11.4px;height:9.4px;" viewBox="0 0 11.4 9.4"><path d="M.4 1.2a.8.8 0 0 1 .8-.8h3l1.2 1.3h4.8a.8.8 0 0 1 .8.8v5.9a.8.8 0 0 1-.8.8H1.2a.8.8 0 0 1-.8-.8z" fill="#9bb3c2"/></svg>
<span class="t" style="left:378.4px;top:328px;font-size:10.3px;line-height:14px;color:#d6d6d6;">01</span>
<div style="left:350.9px;top:347.51px;width:0;height:0;border-top:2.9px solid transparent;border-bottom:2.9px solid transparent;border-left:3.6px solid #dedede"></div>
<svg class="c" style="left:361.6px;top:345.51px;width:11.4px;height:9.4px;" viewBox="0 0 11.4 9.4"><path d="M.4 1.2a.8.8 0 0 1 .8-.8h3l1.2 1.3h4.8a.8.8 0 0 1 .8.8v5.9a.8.8 0 0 1-.8.8H1.2a.8.8 0 0 1-.8-.8z" fill="#9bb3c2"/></svg>
<span class="t" style="left:378.4px;top:345px;font-size:10.3px;line-height:14px;color:#d6d6d6;">02</span>
<div style="left:350.9px;top:364.88px;width:0;height:0;border-top:2.9px solid transparent;border-bottom:2.9px solid transparent;border-left:3.6px solid #dedede"></div>
<svg class="c" style="left:361.6px;top:362.88px;width:11.4px;height:9.4px;" viewBox="0 0 11.4 9.4"><path d="M.4 1.2a.8.8 0 0 1 .8-.8h3l1.2 1.3h4.8a.8.8 0 0 1 .8.8v5.9a.8.8 0 0 1-.8.8H1.2a.8.8 0 0 1-.8-.8z" fill="#9bb3c2"/></svg>
<span class="t" style="left:378.4px;top:363px;font-size:10.3px;line-height:14px;color:#d6d6d6;">03</span>
<div style="left:350.9px;top:382.25px;width:0;height:0;border-top:2.9px solid transparent;border-bottom:2.9px solid transparent;border-left:3.6px solid #dedede"></div>
<svg class="c" style="left:361.6px;top:380.25px;width:11.4px;height:9.4px;" viewBox="0 0 11.4 9.4"><path d="M.4 1.2a.8.8 0 0 1 .8-.8h3l1.2 1.3h4.8a.8.8 0 0 1 .8.8v5.9a.8.8 0 0 1-.8.8H1.2a.8.8 0 0 1-.8-.8z" fill="#9bb3c2"/></svg>
<span class="t" style="left:378.4px;top:380px;font-size:10.3px;line-height:14px;color:#d6d6d6;">04</span>
<div style="left:345.1px;top:399.62px;width:0;height:0;border-top:2.9px solid transparent;border-bottom:2.9px solid transparent;border-left:3.6px solid #dedede"></div>
<svg class="c" style="left:355.6px;top:397.62px;width:11.4px;height:9.4px;" viewBox="0 0 11.4 9.4"><path d="M.4 1.2a.8.8 0 0 1 .8-.8h3l1.2 1.3h4.8a.8.8 0 0 1 .8.8v5.9a.8.8 0 0 1-.8.8H1.2a.8.8 0 0 1-.8-.8z" fill="#9bb3c2"/></svg>
<span class="t" style="left:372.6px;top:396px;font-size:10.3px;line-height:14px;color:#d6d6d6;">user</span>
<div style="left:338.9px;top:416.99px;width:0;height:0;border-top:2.9px solid transparent;border-bottom:2.9px solid transparent;border-left:3.6px solid #dedede"></div>
<svg class="c" style="left:348.8px;top:414.99px;width:11.4px;height:9.4px;" viewBox="0 0 11.4 9.4"><path d="M.4 1.2a.8.8 0 0 1 .8-.8h3l1.2 1.3h4.8a.8.8 0 0 1 .8.8v5.9a.8.8 0 0 1-.8.8H1.2a.8.8 0 0 1-.8-.8z" fill="#7cb342"/><path d="M5.6 4.6l3.6 2.1-3.6 2.1z" fill="#dcedc8"/></svg>
<span class="t" style="left:366.2px;top:414px;font-size:10.3px;line-height:14px;color:#d6d6d6;">utils</span>
<svg class="c" style="left:348.6px;top:431.46px;width:11.6px;height:11.6px;" viewBox="0 0 11.6 11.6"><circle cx="5.8" cy="5.8" r="5.4" fill="#5c6bc0"/><path d="M5.8 2.4l3 1.7v3.4l-3 1.7-3-1.7V4.1z" fill="#c5cae9"/><path d="M5.8 4.3l1.4.8v1.5l-1.4.8-1.4-.8V5.100z" fill="#5c6bc0"/></svg>
<span class="t" style="left:366.2px;top:431px;font-size:10.3px;line-height:14px;color:#d6d6d6;">.eslintrc.js</span>
<svg class="c" style="left:348.4px;top:448.63px;width:12px;height:12px;" viewBox="0 0 12 12"><rect x="2" y="2" width="8" height="8" rx="1" transform="rotate(45 6 6)" fill="#e64a19"/><path d="M4.8 4.2v3.8M4.8 5.400l2.4 1.400" stroke="#3a1208" stroke-width=".9" fill="none"/><circle cx="4.8" cy="8.000" r=".9" fill="#3a1208"/><circle cx="7.3" cy="6.9" r=".9" fill="#3a1208"/></svg>
<span class="t" style="left:366.2px;top:449px;font-size:10.3px;line-height:14px;color:#d6d6d6;">.gitignore</span>
<svg class="c" style="left:349.4px;top:466px;width:9.4px;height:12px;" viewBox="0 0 9.4 12"><path d="M.4 1.2a.8.8 0 0 1 .8-.8h4.6l3.200 3.200v7.200a.8.8 0 0 1-.8.8H1.2a.8.8 0 0 1-.8-.8z" fill="#42a5f5"/><path d="M5.600.400v3.400h3.400z" fill="#bbdefb"/><path d="M2 5.800h5.400M2 7.600h5.400M2 9.400h5.400" stroke="#e3f2fd" stroke-width=".9"/></svg>
<svg class="c" style="left:366.2px;top:465.56px;width:19.8px;height:12.87px;fill:#d6d6d6;" viewBox="0 -1030 2000 1300" role="img" aria-label="必看"><text x="-25.25" y="0" font-size="1000" letter-spacing="-50.5">必看</text></svg>
<span class="t" style="left:385px;top:466px;font-size:10.3px;line-height:14px;color:#d6d6d6;">.txt</span>
<div style="left:349.4px;top:484.37px;width:9.8px;height:9.8px;background:#f5c518;border-radius:1px;"></div>
<span class="t" style="left:352.4px;top:489px;font-size:4.6px;line-height:6px;color:#3a2f00;letter-spacing:0.09px;font-weight:700;">JS</span>
<span class="t" style="left:366.2px;top:483px;font-size:10.3px;line-height:14px;color:#d6d6d6;">app.js</span>
<span class="t" style="left:348.2px;top:500px;font-size:10.4px;line-height:15px;color:#f0b93a;font-weight:700;">{</span>
<span class="t" style="left:357px;top:500px;font-size:10.4px;line-height:15px;color:#f0b93a;font-weight:700;">}</span>
<div style="left:353.1px;top:507.64px;width:1.3px;height:1.3px;background:#f0b93a;"></div>
<div style="left:355.3px;top:507.64px;width:1.3px;height:1.3px;background:#f0b93a;"></div>
<span class="t" style="left:366.2px;top:501px;font-size:10.3px;line-height:14px;color:#d6d6d6;">app.json</span>
<svg class="c" style="left:349px;top:518.91px;width:11px;height:10.6px;" viewBox="0 0 11 10.6"><path d="M.6.400h9.800l-.9 8.200-4 1.600-4-1.600z" fill="#42a5f5"/><path d="M2.600 2.400h5.800M2.800 4.600h5.400M3 6.700l2.500.9 2.500-.9" stroke="#1e1e1e" stroke-width="1" fill="none"/></svg>
<span class="t" style="left:366.2px;top:518px;font-size:10.3px;line-height:14px;color:#d6d6d6;">app.wxss</span>
<span class="t" style="left:348.2px;top:534px;font-size:10.4px;line-height:15px;color:#f0b93a;font-weight:700;">{</span>
<span class="t" style="left:357px;top:534px;font-size:10.4px;line-height:15px;color:#f0b93a;font-weight:700;">}</span>
<div style="left:353.1px;top:542.38px;width:1.3px;height:1.3px;background:#f0b93a;"></div>
<div style="left:355.3px;top:542.38px;width:1.3px;height:1.3px;background:#f0b93a;"></div>
<span class="t" style="left:366.2px;top:535px;font-size:10.3px;line-height:14px;color:#d6d6d6;">project.config.json</span>
<span class="t" style="left:348.2px;top:552px;font-size:10.4px;line-height:15px;color:#f0b93a;font-weight:700;">{</span>
<span class="t" style="left:357px;top:552px;font-size:10.4px;line-height:15px;color:#f0b93a;font-weight:700;">}</span>
<div style="left:353.1px;top:559.75px;width:1.3px;height:1.3px;background:#f0b93a;"></div>
<div style="left:355.3px;top:559.75px;width:1.3px;height:1.3px;background:#f0b93a;"></div>
<span class="t" style="left:366.2px;top:553px;font-size:10.3px;line-height:14px;color:#d6d6d6;">sitemap.json</span>
<svg class="c" style="left:326px;top:32.4px;width:150px;height:17px;" viewBox="0 0 150 17"><g fill="none" stroke="#f2f2f2" stroke-width="1.25" stroke-linejoin="round"><path d="M5.600 3.600V2h4.800l2.800 2.800v7.200H10"/><path d="M10.200 2.200v2.800h2.800"/><path d="M2.600 4.800h5l2.200 2.200v7.200H2.600z"/></g><g fill="none" stroke="#8a8a8a" stroke-width="1.2"><circle cx="36.400" cy="6.400" r="4"/><path d="M33.600 9.400l-4.400 4.800"/><circle cx="56.600" cy="3.200" r="1.700"/><circle cx="56.600" cy="13.200" r="1.700"/><circle cx="63.200" cy="5.600" r="1.700"/><path d="M56.600 4.900v6.600M63.200 7.300c0 2.600-6.600 1.600-6.600 4.200"/><path d="M79.400 8.600h4.600v4.600h-4.600zM84 8.600h4.600v4.600H84zM79.400 4h4.600v4.600h-4.600z"/><rect x="86" y="1.600" width="4.400" height="4.400"/><rect x="104.600" y="2.800" width="9.600" height="10.400" rx=".8"/><path d="M104.600 6.600h5.400v3h4.200"/></g><g fill="#8a8a8a"><path d="M128 8.600h11.600c.6-1.600 1.600-2 2.600-1.600-.2 1.200-1 1.800-2 2-.8 2.800-3 4.200-6.400 4.200-3.200 0-5.400-1.400-5.800-4.600z"/><rect x="130" y="6.200" width="1.800" height="1.800"/><rect x="132.300" y="6.200" width="1.800" height="1.800"/><rect x="134.600" y="6.200" width="1.800" height="1.800"/><rect x="132.300" y="3.900" width="1.800" height="1.800"/><rect x="134.600" y="3.900" width="1.800" height="1.800"/><rect x="134.600" y="1.600" width="1.800" height="1.800"/></g></svg>
<div style="left:478px;top:28.5px;width:522px;height:23.7px;background:#2e2e2e;"></div>
<div style="left:558.4px;top:28.5px;width:0.8px;height:23.7px;background:#252526;"></div>
<span class="t" style="left:480.6px;top:35px;font-size:10.2px;line-height:14px;color:#f0b93a;font-weight:700;">}</span>
<span class="t" style="left:490.4px;top:35px;font-size:9.7px;line-height:14px;color:#a6a6a6;">01.json</span>
<div style="left:654px;top:28.5px;width:0.8px;height:23.7px;background:#252526;"></div>
<span class="t" style="left:567.4px;top:35px;font-size:10.2px;line-height:14px;color:#f0b93a;font-weight:700;">{</span>
<span class="t" style="left:575.8px;top:35px;font-size:10.2px;line-height:14px;color:#f0b93a;font-weight:700;">}</span>
<div style="left:571.9px;top:42px;width:1.2px;height:1.2px;background:#f0b93a;"></div>
<div style="left:574px;top:42px;width:1.2px;height:1.2px;background:#f0b93a;"></div>
<span class="t" style="left:585.6px;top:35px;font-size:9.7px;line-height:14px;color:#a6a6a6;">02.json</span>
<div style="left:748.6px;top:28.5px;width:0.8px;height:23.7px;background:#252526;"></div>
<span class="t" style="left:663px;top:35px;font-size:10.2px;line-height:14px;color:#f0b93a;font-weight:700;">{</span>
<span class="t" style="left:671.4px;top:35px;font-size:10.2px;line-height:14px;color:#f0b93a;font-weight:700;">}</span>
<div style="left:667.5px;top:42px;width:1.2px;height:1.2px;background:#f0b93a;"></div>
<div style="left:669.6px;top:42px;width:1.2px;height:1.2px;background:#f0b93a;"></div>
<span class="t" style="left:681.2px;top:35px;font-size:9.7px;line-height:14px;color:#a6a6a6;">03.json</span>
<div style="left:843.4px;top:28.5px;width:0.8px;height:23.7px;background:#252526;"></div>
<span class="t" style="left:757.6px;top:35px;font-size:10.2px;line-height:14px;color:#f0b93a;font-weight:700;">{</span>
<span class="t" style="left:766px;top:35px;font-size:10.2px;line-height:14px;color:#f0b93a;font-weight:700;">}</span>
<div style="left:762.1px;top:42px;width:1.2px;height:1.2px;background:#f0b93a;"></div>
<div style="left:764.2px;top:42px;width:1.2px;height:1.2px;background:#f0b93a;"></div>
<span class="t" style="left:775.8px;top:35px;font-size:9.7px;line-height:14px;color:#a6a6a6;">04.json</span>
<div style="left:844px;top:28.5px;width:93.4px;height:23.7px;background:#2c2c2e;"></div>
<div style="left:853.8px;top:36px;width:10px;height:10px;background:#f5c518;border-radius:1px;"></div>
<span class="t" style="left:856.8px;top:40px;font-size:4.7px;line-height:7px;color:#3a2f00;letter-spacing:0.08px;font-weight:700;">JS</span>
<span class="t" style="left:869.2px;top:35px;font-size:9.7px;line-height:14px;color:#ffffff;">01.js</span>
<svg class="c" style="left:921.6px;top:36.4px;width:9px;height:9px;" viewBox="0 0 9 9"><path d="M1 1l7 7M8 1l-7 7" stroke="#e8e8e8" stroke-width="1.2" fill="none"/></svg>
<svg class="c" style="left:947.6px;top:35.6px;width:11px;height:11px;" viewBox="0 0 11 11"><rect x=".8" y=".8" width="9.400" height="9.400" rx=".6" fill="none" stroke="#d0d0d0" stroke-width="1.2"/><path d="M5.500 1v9" stroke="#d0d0d0" stroke-width="1.2"/></svg>
<div style="left:973.2px;top:40.4px;width:1.7px;height:1.7px;background:#d0d0d0;border-radius:50%;"></div>
<div style="left:977.2px;top:40.4px;width:1.7px;height:1.7px;background:#d0d0d0;border-radius:50%;"></div>
<div style="left:981.2px;top:40.4px;width:1.7px;height:1.7px;background:#d0d0d0;border-radius:50%;"></div>
<div style="left:480px;top:52.2px;width:520px;height:285px;background:#2c2c2e;"></div>
<div style="left:486.2px;top:57.4px;width:12px;height:1.1px;background:#8c8c8c;"></div>
<div style="left:486.2px;top:59.9px;width:12px;height:1.1px;background:#8c8c8c;"></div>
<div style="left:486.2px;top:62.4px;width:12px;height:1.1px;background:#8c8c8c;"></div>
<div style="left:486.2px;top:64.9px;width:12px;height:1.1px;background:#8c8c8c;"></div>
<svg class="c" style="left:511.4px;top:55.6px;width:9px;height:11.4px;" viewBox="0 0 9 11.4"><path d="M1 .7h7v9.700L4.500 7.400 1 10.400z" fill="none" stroke="#c8c8c8" stroke-width="1.2" stroke-linejoin="round"/></svg>
<svg class="c" style="left:533.4px;top:57px;width:11px;height:9px;" viewBox="0 0 11 9"><path d="M10.400 4.500H1M4.600 .8L1 4.500l3.600 3.700" fill="none" stroke="#c8c8c8" stroke-width="1.1"/></svg>
<svg class="c" style="left:556.6px;top:57px;width:11px;height:9px;" viewBox="0 0 11 9"><path d="M.6 4.500H10M6.400 .8L10 4.500 6.400 8.200" fill="none" stroke="#555" stroke-width="1.1"/></svg>
<span class="t" style="left:580px;top:55.13px;font-size:10px;line-height:14px;color:#a6a6a6;letter-spacing:-0.13px;">pages</span>
<svg class="c" style="left:610.6px;top:59.1px;width:5.4px;height:7.6px;" viewBox="0 0 5.4 7.6"><path d="M1 .6l3.400 3.200-3.400 3.200" fill="none" stroke="#a6a6a6" stroke-width="1.05"/></svg>
<span class="t" style="left:619px;top:55.13px;font-size:10px;line-height:14px;color:#a6a6a6;letter-spacing:0.08px;">shop</span>
<svg class="c" style="left:645.6px;top:59.1px;width:5.4px;height:7.6px;" viewBox="0 0 5.4 7.6"><path d="M1 .6l3.400 3.200-3.400 3.200" fill="none" stroke="#a6a6a6" stroke-width="1.05"/></svg>
<span class="t" style="left:654px;top:56.03px;font-size:10px;line-height:14px;color:#a6a6a6;letter-spacing:-0.36px;">01</span>
<svg class="c" style="left:668.6px;top:59.1px;width:5.4px;height:7.6px;" viewBox="0 0 5.4 7.6"><path d="M1 .6l3.400 3.200-3.400 3.200" fill="none" stroke="#a6a6a6" stroke-width="1.05"/></svg>
<div style="left:678.8px;top:56.8px;width:10px;height:9.6px;background:#f5c518;border-radius:1px;"></div>
<span class="t" style="left:682px;top:61px;font-size:4.6px;line-height:6px;color:#3a2f00;letter-spacing:0.09px;font-weight:700;">JS</span>
<span class="t" style="left:695px;top:55.13px;font-size:10px;line-height:14px;color:#d8d8d8;letter-spacing:-0.3px;">01.js</span>
<svg class="c" style="left:719.2px;top:59.1px;width:5.4px;height:7.6px;" viewBox="0 0 5.4 7.6"><path d="M1 .6l3.400 3.200-3.400 3.200" fill="none" stroke="#a6a6a6" stroke-width="1.05"/></svg>
<svg class="c" style="left:728.8px;top:56.6px;width:11px;height:11.2px;" viewBox="0 0 11 11.2"><g fill="none" stroke="#b180d7" stroke-width="1" stroke-linejoin="round"><path d="M5.500 .8l4.500 2.300v5l-4.500 2.300L1 8.100v-5z"/><path d="M1 3.100l4.500 2.300 4.500-2.300M5.500 5.400v5"/></g></svg>
<span class="t" style="left:746px;top:55.13px;font-size:10px;line-height:14px;color:#a6a6a6;letter-spacing:0px;">getUserProfile</span>
<svg class="c" style="left:814px;top:59.1px;width:5.4px;height:7.6px;" viewBox="0 0 5.4 7.6"><path d="M1 .6l3.400 3.200-3.400 3.200" fill="none" stroke="#a6a6a6" stroke-width="1.05"/></svg>
<svg class="c" style="left:823.6px;top:56.6px;width:11px;height:11.2px;" viewBox="0 0 11 11.2"><g fill="none" stroke="#b180d7" stroke-width="1" stroke-linejoin="round"><path d="M5.500 .8l4.500 2.300v5l-4.500 2.300L1 8.100v-5z"/><path d="M1 3.100l4.500 2.300 4.500-2.300M5.500 5.400v5"/></g></svg>
<span class="t" style="left:840px;top:55.13px;font-size:10px;line-height:14px;color:#a6a6a6;letter-spacing:-0.42px;">success</span>
<svg class="c" style="left:878.2px;top:59.1px;width:5.4px;height:7.6px;" viewBox="0 0 5.4 7.6"><path d="M1 .6l3.400 3.200-3.400 3.200" fill="none" stroke="#a6a6a6" stroke-width="1.05"/></svg>
<svg class="c" style="left:886.8px;top:56.8px;width:11px;height:11px;" viewBox="0 0 11 11"><path d="M9.600 2.200a2.900 2.900 0 0 1-3.800 3.200L2.600 9.600a1 1 0 0 1-1.500-1.400l4.200-3.400A2.900 2.900 0 0 1 8.400.900L6.700 2.600l.4 1.500 1.500.4z" fill="none" stroke="#c0c0c0" stroke-width="1" stroke-linejoin="round"/></svg>
<span class="t" style="left:903.6px;top:55.13px;font-size:10px;line-height:14px;color:#a6a6a6;letter-spacing:0.1px;">url</span>
<span class="m" style="left:509.18px;top:75px;font-size:8.7px;line-height:12px;color:#444446;">1</span>
<span class="m" style="left:509.18px;top:94px;font-size:8.7px;line-height:12px;color:#444446;">2</span>
<span class="m" style="left:509.18px;top:113px;font-size:8.7px;line-height:12px;color:#444446;">3</span>
<span class="m" style="left:509.18px;top:132px;font-size:8.7px;line-height:12px;color:#444446;">4</span>
<span class="m" style="left:509.18px;top:151px;font-size:8.7px;line-height:12px;color:#444446;">5</span>
<span class="m" style="left:509.18px;top:170px;font-size:8.7px;line-height:12px;color:#444446;">6</span>
<span class="m" style="left:509.18px;top:189px;font-size:8.7px;line-height:12px;color:#444446;">7</span>
<span class="m" style="left:509.18px;top:208px;font-size:8.7px;line-height:12px;color:#444446;">8</span>
<span class="m" style="left:509.18px;top:227px;font-size:8.7px;line-height:12px;color:#444446;">9</span>
<span class="m" style="left:503.97px;top:246px;font-size:8.7px;line-height:12px;color:#444446;">10</span>
<span class="m" style="left:503.97px;top:265px;font-size:8.7px;line-height:12px;color:#444446;">11</span>
<span class="m" style="left:503.97px;top:284px;font-size:8.7px;line-height:12px;color:#444446;">12</span>
<span class="m" style="left:503.97px;top:303px;font-size:8.7px;line-height:12px;color:#444446;">13</span>
<span class="m" style="left:503.97px;top:322px;font-size:8.7px;line-height:12px;color:#444446;">14</span>
<svg class="c" style="left:520.6px;top:111.7px;width:8.6px;height:5.6px;" viewBox="0 0 8.6 5.6"><path d="M.6 .6l3.700 3.800L8 .6" fill="none" stroke="#cfcfcf" stroke-width=".95"/></svg>
<svg class="c" style="left:520.6px;top:130.7px;width:8.6px;height:5.6px;" viewBox="0 0 8.6 5.6"><path d="M.6 .6l3.700 3.800L8 .6" fill="none" stroke="#cfcfcf" stroke-width=".95"/></svg>
<svg class="c" style="left:520.6px;top:263.7px;width:8.6px;height:5.6px;" viewBox="0 0 8.6 5.6"><path d="M.6 .6l3.700 3.800L8 .6" fill="none" stroke="#cfcfcf" stroke-width=".95"/></svg>
<svg class="c" style="left:520.6px;top:301.7px;width:8.6px;height:5.6px;" viewBox="0 0 8.6 5.6"><path d="M.6 .6l3.700 3.800L8 .6" fill="none" stroke="#cfcfcf" stroke-width=".95"/></svg>
<svg class="c" style="left:520.6px;top:320.7px;width:8.6px;height:5.6px;" viewBox="0 0 8.6 5.6"><path d="M.6 .6l3.700 3.800L8 .6" fill="none" stroke="#cfcfcf" stroke-width=".95"/></svg>
<div style="left:535.6px;top:127.2px;width:0.8px;height:209px;background:#3d3d3f;"></div>
<div style="left:546.03px;top:127.2px;width:0.8px;height:209px;background:#3d3d3f;"></div>
<div style="left:556.46px;top:146.2px;width:0.8px;height:95px;background:#3d3d3f;"></div>
<div style="left:556.46px;top:279.2px;width:0.8px;height:57px;background:#3d3d3f;"></div>
<div style="left:566.89px;top:146.2px;width:0.8px;height:95px;background:#3d3d3f;"></div>
<div style="left:566.89px;top:317.2px;width:0.8px;height:19px;background:#3d3d3f;"></div>
<span class="m" style="left:535.4px;top:74px;font-size:8.7px;line-height:12px;color:#569cd6;font-weight:700;">import</span>
<span class="m" style="left:571.9px;top:74px;font-size:8.7px;line-height:12px;color:#d4d4d4;font-weight:700;">Toast </span>
<span class="m" style="left:603.19px;top:74px;font-size:8.7px;line-height:12px;color:#569cd6;font-weight:700;">from</span>
<span class="m" style="left:629.27px;top:74px;font-size:8.7px;line-height:12px;color:#e8584f;font-weight:700;">'../../../dist/toast/toast'</span>
<span class="m" style="left:770.07px;top:74px;font-size:8.7px;line-height:12px;color:#d4d4d4;font-weight:700;">;</span>
<span class="m" style="left:535.4px;top:93px;font-size:8.7px;line-height:12px;color:#d9c26c;font-weight:700;">const</span>
<span class="m" style="left:566.69px;top:93px;font-size:8.7px;line-height:12px;color:#d4d4d4;font-weight:700;">app = </span>
<span class="m" style="left:597.98px;top:93px;font-size:8.7px;line-height:12px;color:#e5a548;font-weight:700;">getApp</span>
<span class="m" style="left:629.27px;top:93px;font-size:8.7px;line-height:12px;color:#ffd700;font-weight:700;">()</span>
<span class="m" style="left:535.4px;top:112px;font-size:8.7px;line-height:12px;color:#e5a548;font-weight:700;">Page</span>
<span class="m" style="left:556.26px;top:112px;font-size:8.7px;line-height:12px;color:#ffd700;font-weight:700;">(</span>
<span class="m" style="left:561.48px;top:112px;font-size:8.7px;line-height:12px;color:#da70d6;font-weight:700;">{</span>
<span class="m" style="left:556.26px;top:131px;font-size:8.7px;line-height:12px;color:#d4d4d4;font-weight:700;">data</span>
<span class="m" style="left:577.12px;top:131px;font-size:8.7px;line-height:12px;color:#d4d4d4;font-weight:700;">: </span>
<span class="m" style="left:587.55px;top:131px;font-size:8.7px;line-height:12px;color:#179fff;font-weight:700;">{</span>
<span class="m" style="left:577.12px;top:150px;font-size:8.7px;line-height:12px;color:#d4d4d4;font-weight:700;">input:"",</span>
<span class="m" style="left:577.12px;top:169px;font-size:8.7px;line-height:12px;color:#d4d4d4;font-weight:700;">num:</span>
<span class="m" style="left:597.98px;top:169px;font-size:8.7px;line-height:12px;color:#e8584f;font-weight:700;">"10"</span>
<span class="m" style="left:618.84px;top:169px;font-size:8.7px;line-height:12px;color:#d4d4d4;font-weight:700;">,</span>
<span class="m" style="left:577.12px;top:188px;font-size:8.7px;line-height:12px;color:#d4d4d4;font-weight:700;">url: app.globalData.url+</span>
<span class="m" style="left:702.28px;top:188px;font-size:8.7px;line-height:12px;color:#e8584f;font-weight:700;">'/img/kj.png'</span>
<span class="m" style="left:770.07px;top:188px;font-size:8.7px;line-height:12px;color:#d4d4d4;font-weight:700;">,</span>
<span class="m" style="left:577.12px;top:207px;font-size:8.7px;line-height:12px;color:#d4d4d4;font-weight:700;">dingdan:"",</span>
<span class="m" style="left:577.12px;top:226px;font-size:8.7px;line-height:12px;color:#d4d4d4;font-weight:700;">panduan:</span>
<span class="m" style="left:618.84px;top:226px;font-size:8.7px;line-height:12px;color:#e8584f;font-weight:700;">false</span>
<span class="m" style="left:556.26px;top:245px;font-size:8.7px;line-height:12px;color:#179fff;font-weight:700;">}</span>
<span class="m" style="left:561.48px;top:245px;font-size:8.7px;line-height:12px;color:#d4d4d4;font-weight:700;">,</span>
<span class="m" style="left:556.26px;top:264px;font-size:8.7px;line-height:12px;color:#e5a548;font-weight:700;">onLoad</span>
<span class="m" style="left:587.55px;top:264px;font-size:8.7px;line-height:12px;color:#d4d4d4;font-weight:700;">: </span>
<span class="m" style="left:597.98px;top:264px;font-size:8.7px;line-height:12px;color:#569cd6;font-weight:700;">function</span>
<span class="m" style="left:644.91px;top:264px;font-size:8.7px;line-height:12px;color:#179fff;font-weight:700;">(</span>
<span class="m" style="left:650.13px;top:264px;font-size:8.7px;line-height:12px;color:#a07e63;font-weight:700;">options</span>
<span class="m" style="left:686.63px;top:264px;font-size:8.7px;line-height:12px;color:#179fff;font-weight:700;">)</span>
<span class="m" style="left:697.06px;top:264px;font-size:8.7px;line-height:12px;color:#179fff;font-weight:700;">{</span>
<span class="m" style="left:566.69px;top:283px;font-size:8.7px;line-height:12px;color:#569cd6;font-weight:700;">var</span>
<span class="m" style="left:587.55px;top:283px;font-size:8.7px;line-height:12px;color:#d4d4d4;font-weight:700;">that = </span>
<span class="m" style="left:624.05px;top:283px;font-size:8.7px;line-height:12px;color:#569cd6;font-weight:700;">this</span>
<span class="m" style="left:644.91px;top:283px;font-size:8.7px;line-height:12px;color:#d4d4d4;font-weight:700;">;</span>
<span class="m" style="left:566.69px;top:302px;font-size:8.7px;line-height:12px;color:#569cd6;font-weight:700;">if</span>
<span class="m" style="left:577.12px;top:302px;font-size:8.7px;line-height:12px;color:#ffd700;font-weight:700;">(</span>
<span class="m" style="left:582.34px;top:302px;font-size:8.7px;line-height:12px;color:#d4d4d4;font-weight:700;">wx.</span>
<span class="m" style="left:597.98px;top:302px;font-size:8.7px;line-height:12px;color:#e5a548;font-weight:700;">getStorageSync</span>
<span class="m" style="left:670.99px;top:302px;font-size:8.7px;line-height:12px;color:#da70d6;font-weight:700;">(</span>
<span class="m" style="left:676.2px;top:302px;font-size:8.7px;line-height:12px;color:#e8584f;font-weight:700;">'name'</span>
<span class="m" style="left:707.5px;top:302px;font-size:8.7px;line-height:12px;color:#da70d6;font-weight:700;">)</span>
<span class="m" style="left:712.71px;top:302px;font-size:8.7px;line-height:12px;color:#d4d4d4;font-weight:700;">==""</span>
<span class="m" style="left:733.57px;top:302px;font-size:8.7px;line-height:12px;color:#ffd700;font-weight:700;">)</span>
<span class="m" style="left:738.78px;top:302px;font-size:8.7px;line-height:12px;color:#ffd700;font-weight:700;">{</span>
<span class="m" style="left:577.12px;top:321px;font-size:8.7px;line-height:12px;color:#d4d4d4;font-weight:700;">that.</span>
<span class="m" style="left:603.19px;top:321px;font-size:8.7px;line-height:12px;color:#e5a548;font-weight:700;">setData</span>
<span class="m" style="left:639.7px;top:321px;font-size:8.7px;line-height:12px;color:#da70d6;font-weight:700;">(</span>
<span class="m" style="left:644.91px;top:321px;font-size:8.7px;line-height:12px;color:#179fff;font-weight:700;">{</span>
<svg class="c" style="left:937px;top:68px;width:55px;height:252px;" viewBox="0 0 55 252"><g opacity=".58"><rect x="6.1" y="1" width="4.03" height="1.050" fill="#6483a3"/><rect x="10.68" y="1" width="4.3" height="1.050" fill="#b58a4c"/><rect x="15.46" y="1" width="3.37" height="1.050" fill="#9c9c9c"/><rect x="6.1" y="2.58" width="6.34" height="1.050" fill="#b58a4c"/><rect x="13.34" y="2.58" width="5.74" height="1.050" fill="#9c9c9c"/><rect x="19.53" y="2.58" width="2.86" height="1.050" fill="#6483a3"/><rect x="8.7" y="4.16" width="4.34" height="1.050" fill="#a9a9a9"/><rect x="13.84" y="4.16" width="4.98" height="1.050" fill="#8f8f8f"/><rect x="11.3" y="5.74" width="5.19" height="1.050" fill="#c2a95a"/><rect x="8.7" y="7.32" width="3.8" height="1.050" fill="#a9a9a9"/><rect x="8.7" y="8.9" width="2.96" height="1.050" fill="#c9b46a"/><rect x="11.3" y="10.48" width="4.55" height="1.050" fill="#6483a3"/><rect x="8.7" y="12.06" width="2.07" height="1.050" fill="#a0645c"/><rect x="11.77" y="12.06" width="2.53" height="1.050" fill="#6483a3"/><rect x="16.27" y="12.06" width="15.97" height="1" fill="#77705a" opacity=".7"/><rect x="11.3" y="13.64" width="4.01" height="1.050" fill="#6483a3"/><rect x="16.5" y="13.64" width="5.46" height="1.050" fill="#a0645c"/><rect x="23.88" y="13.64" width="15.31" height="1" fill="#77705a" opacity=".7"/><rect x="8.7" y="15.22" width="5.89" height="1.050" fill="#a9a9a9"/><rect x="15.79" y="15.22" width="2.09" height="1.050" fill="#b58a4c"/><rect x="8.7" y="16.8" width="2.19" height="1.050" fill="#b58a4c"/><rect x="8.7" y="18.38" width="5.74" height="1.050" fill="#a0645c"/><rect x="14.9" y="18.38" width="2.41" height="1.050" fill="#6483a3"/><rect x="8.7" y="19.96" width="6.32" height="1.050" fill="#8f8f8f"/><rect x="16.08" y="19.96" width="2.61" height="1.050" fill="#a0645c"/><rect x="8.7" y="21.54" width="5.26" height="1.050" fill="#b58a4c"/><rect x="14.96" y="21.54" width="6.23" height="1.050" fill="#6483a3"/><rect x="11.3" y="23.12" width="3.9" height="1.050" fill="#9c9c9c"/><rect x="8.7" y="24.7" width="3.16" height="1.050" fill="#8f8f8f"/><rect x="12.49" y="24.7" width="2.79" height="1.050" fill="#9c9c9c"/><rect x="15.78" y="24.7" width="4.16" height="1.050" fill="#9c9c9c"/><rect x="6.1" y="26.28" width="2.31" height="1.050" fill="#a0645c"/><rect x="10.17" y="26.28" width="11.64" height="1" fill="#77705a" opacity=".7"/><rect x="8.7" y="27.86" width="2.41" height="1.050" fill="#b58a4c"/><rect x="12.23" y="27.86" width="6.41" height="1.050" fill="#b58a4c"/><rect x="11.3" y="29.44" width="5.15" height="1.050" fill="#c9b46a"/><rect x="16.87" y="29.44" width="4.86" height="1.050" fill="#8f8f8f"/><rect x="8.7" y="31.02" width="2.34" height="1.050" fill="#c2a95a"/><rect x="8.7" y="32.6" width="5.57" height="1.050" fill="#c2a95a"/><rect x="14.95" y="32.6" width="5.08" height="1.050" fill="#9c9c9c"/><rect x="8.7" y="34.18" width="4.58" height="1.050" fill="#a0645c"/><rect x="13.98" y="34.18" width="2.06" height="1.050" fill="#9c9c9c"/><rect x="16.5" y="34.18" width="4.88" height="1.050" fill="#a9a9a9"/><rect x="11.3" y="35.76" width="3.98" height="1.050" fill="#9c9c9c"/><rect x="16.1" y="35.76" width="4.32" height="1.050" fill="#a9a9a9"/><rect x="21.29" y="35.76" width="4.16" height="1.050" fill="#6483a3"/><rect x="27.62" y="35.76" width="20.7" height="1" fill="#77705a" opacity=".7"/><rect x="11.3" y="37.34" width="3.15" height="1.050" fill="#c9b46a"/><rect x="15.15" y="37.34" width="2.64" height="1.050" fill="#6483a3"/><rect x="18.6" y="37.34" width="5.39" height="1.050" fill="#c2a95a"/><rect x="11.3" y="38.92" width="3.82" height="1.050" fill="#a9a9a9"/><rect x="15.68" y="38.92" width="3.94" height="1.050" fill="#6483a3"/><rect x="13.9" y="40.5" width="2.94" height="1.050" fill="#b58a4c"/><rect x="17.64" y="40.5" width="5.77" height="1.050" fill="#c9b46a"/><rect x="11.3" y="42.08" width="2.51" height="1.050" fill="#8f8f8f"/><rect x="14.43" y="42.08" width="2.96" height="1.050" fill="#a0645c"/><rect x="11.3" y="43.66" width="3.44" height="1.050" fill="#c9b46a"/><rect x="15.36" y="43.66" width="4.73" height="1.050" fill="#a9a9a9"/><rect x="20.95" y="43.66" width="3.39" height="1.050" fill="#c9b46a"/><rect x="8.7" y="45.24" width="3.07" height="1.050" fill="#b58a4c"/><rect x="12.81" y="45.24" width="6.43" height="1.050" fill="#9c9c9c"/><rect x="8.7" y="46.82" width="6.31" height="1.050" fill="#6483a3"/><rect x="15.57" y="46.82" width="4.14" height="1.050" fill="#b58a4c"/><rect x="11.3" y="48.4" width="2.81" height="1.050" fill="#a9a9a9"/><rect x="11.3" y="49.98" width="3.77" height="1.050" fill="#6483a3"/><rect x="15.54" y="49.98" width="6.2" height="1.050" fill="#a0645c"/><rect x="11.3" y="51.56" width="3.7" height="1.050" fill="#c2a95a"/><rect x="8.7" y="53.14" width="2.96" height="1.050" fill="#a0645c"/><rect x="11.3" y="54.72" width="3.18" height="1.050" fill="#c9b46a"/><rect x="15.16" y="54.72" width="2.37" height="1.050" fill="#8f8f8f"/><rect x="8.7" y="56.3" width="2.98" height="1.050" fill="#9c9c9c"/><rect x="13.43" y="56.3" width="17" height="1" fill="#77705a" opacity=".7"/><rect x="8.7" y="57.88" width="4.12" height="1.050" fill="#8f8f8f"/><rect x="13.97" y="57.88" width="4.22" height="1.050" fill="#9c9c9c"/><rect x="11.3" y="59.46" width="4.35" height="1.050" fill="#a9a9a9"/><rect x="16.3" y="59.46" width="3.72" height="1.050" fill="#6483a3"/><rect x="13.9" y="61.04" width="4.58" height="1.050" fill="#6483a3"/><rect x="19.21" y="61.04" width="2.51" height="1.050" fill="#c9b46a"/><rect x="23.61" y="61.04" width="23.54" height="1" fill="#77705a" opacity=".7"/><rect x="15.5" y="62.62" width="4.45" height="1.050" fill="#9c9c9c"/><rect x="20.74" y="62.62" width="5.11" height="1.050" fill="#9c9c9c"/><rect x="26.99" y="62.62" width="4.07" height="1.050" fill="#a0645c"/><rect x="12.9" y="64.2" width="6.05" height="1.050" fill="#8f8f8f"/><rect x="19.77" y="64.2" width="2.49" height="1.050" fill="#a0645c"/><rect x="23.16" y="64.2" width="6.16" height="1.050" fill="#b58a4c"/><rect x="10.3" y="65.78" width="3.02" height="1.050" fill="#a9a9a9"/><rect x="13.98" y="65.78" width="3.6" height="1.050" fill="#8f8f8f"/><rect x="7.7" y="67.36" width="5.23" height="1.050" fill="#a0645c"/><rect x="13.35" y="67.36" width="4.85" height="1.050" fill="#b58a4c"/><rect x="10.3" y="68.94" width="4.38" height="1.050" fill="#b58a4c"/><rect x="15.27" y="68.94" width="5.33" height="1.050" fill="#c2a95a"/><rect x="12.9" y="70.52" width="2.98" height="1.050" fill="#6483a3"/><rect x="16.99" y="70.52" width="2.6" height="1.050" fill="#6483a3"/><rect x="21.1" y="70.52" width="14.82" height="1" fill="#77705a" opacity=".7"/><rect x="15.5" y="72.1" width="4.44" height="1.050" fill="#b58a4c"/><rect x="20.51" y="72.1" width="4.83" height="1.050" fill="#c9b46a"/><rect x="25.81" y="72.1" width="4.56" height="1.050" fill="#c2a95a"/><rect x="12.9" y="73.68" width="4.26" height="1.050" fill="#6483a3"/><rect x="18.2" y="73.68" width="4.17" height="1.050" fill="#c9b46a"/><rect x="15.5" y="75.26" width="2.66" height="1.050" fill="#b58a4c"/><rect x="18.65" y="75.26" width="2.78" height="1.050" fill="#b58a4c"/><rect x="22.62" y="75.26" width="6.17" height="1.050" fill="#9c9c9c"/><rect x="15.5" y="76.84" width="5.44" height="1.050" fill="#c2a95a"/><rect x="15.5" y="78.42" width="4.7" height="1.050" fill="#c9b46a"/><rect x="21.11" y="78.42" width="2.18" height="1.050" fill="#6483a3"/><rect x="15.5" y="80" width="6.15" height="1.050" fill="#b58a4c"/><rect x="22.12" y="80" width="5.57" height="1.050" fill="#c2a95a"/><rect x="28.8" y="80" width="5.61" height="1.050" fill="#a0645c"/><rect x="15.5" y="81.58" width="5.62" height="1.050" fill="#a9a9a9"/><rect x="21.75" y="81.58" width="2.52" height="1.050" fill="#b58a4c"/><rect x="15.5" y="83.16" width="5.45" height="1.050" fill="#b58a4c"/><rect x="21.68" y="83.16" width="5.25" height="1.050" fill="#9c9c9c"/><rect x="12.9" y="84.74" width="6.46" height="1.050" fill="#c9b46a"/><rect x="19.94" y="84.74" width="6.25" height="1.050" fill="#a9a9a9"/><rect x="15.5" y="86.32" width="3.75" height="1.050" fill="#8f8f8f"/><rect x="15.5" y="87.9" width="2.52" height="1.050" fill="#9c9c9c"/><rect x="15.5" y="89.48" width="5.43" height="1.050" fill="#a0645c"/><rect x="12.9" y="91.06" width="4.48" height="1.050" fill="#a0645c"/><rect x="18.55" y="91.06" width="4.56" height="1.050" fill="#9c9c9c"/><rect x="10.3" y="92.64" width="3.74" height="1.050" fill="#b58a4c"/><rect x="7.6" y="105.28" width="4.39" height="1.050" fill="#8f8f8f"/><rect x="12.91" y="105.28" width="4.52" height="1.050" fill="#a9a9a9"/><rect x="5" y="106.86" width="4.64" height="1.050" fill="#b58a4c"/><rect x="10.36" y="106.86" width="5.08" height="1.050" fill="#c9b46a"/><rect x="3" y="108.44" width="2.33" height="1.050" fill="#6483a3"/><rect x="6.07" y="108.44" width="4.15" height="1.050" fill="#6483a3"/><rect x="11.66" y="108.44" width="21.15" height="1" fill="#77705a" opacity=".7"/><rect x="3" y="110.02" width="6.4" height="1.050" fill="#6483a3"/><rect x="10.29" y="110.02" width="2.52" height="1.050" fill="#a0645c"/><rect x="3" y="111.6" width="2.56" height="1.050" fill="#8f8f8f"/><rect x="6.07" y="111.6" width="3.88" height="1.050" fill="#a9a9a9"/><rect x="5.6" y="113.18" width="6.29" height="1.050" fill="#b58a4c"/><rect x="12.48" y="113.18" width="2.51" height="1.050" fill="#a9a9a9"/><rect x="8.2" y="114.76" width="4.74" height="1.050" fill="#6483a3"/><rect x="13.85" y="114.76" width="5.39" height="1.050" fill="#6483a3"/><rect x="8.2" y="116.34" width="5.95" height="1.050" fill="#c9b46a"/><rect x="15.06" y="116.34" width="2.04" height="1.050" fill="#a9a9a9"/><rect x="5.6" y="117.92" width="2.33" height="1.050" fill="#9c9c9c"/><rect x="9.06" y="117.92" width="2.72" height="1.050" fill="#6483a3"/><rect x="8.2" y="119.5" width="3.52" height="1.050" fill="#8f8f8f"/><rect x="12.72" y="119.5" width="5.77" height="1.050" fill="#9c9c9c"/><rect x="8.2" y="121.08" width="4" height="1.050" fill="#a9a9a9"/><rect x="12.91" y="121.08" width="2.68" height="1.050" fill="#b58a4c"/><rect x="10.8" y="122.66" width="3.92" height="1.050" fill="#c2a95a"/><rect x="15.59" y="122.66" width="4.08" height="1.050" fill="#c2a95a"/><rect x="21.13" y="122.66" width="17.46" height="1" fill="#77705a" opacity=".7"/><rect x="13.4" y="124.24" width="3.34" height="1.050" fill="#c9b46a"/><rect x="17.21" y="124.24" width="2.96" height="1.050" fill="#9c9c9c"/><rect x="21.12" y="124.24" width="4.23" height="1.050" fill="#c2a95a"/><rect x="15.5" y="125.82" width="3.65" height="1.050" fill="#9c9c9c"/><rect x="19.81" y="125.82" width="3.98" height="1.050" fill="#a9a9a9"/><rect x="15.5" y="127.4" width="3" height="1.050" fill="#6483a3"/><rect x="18.96" y="127.4" width="5.73" height="1.050" fill="#c9b46a"/><rect x="15.5" y="128.98" width="5.32" height="1.050" fill="#c2a95a"/><rect x="21.86" y="128.98" width="4.43" height="1.050" fill="#b58a4c"/><rect x="15.5" y="130.56" width="5.65" height="1.050" fill="#6483a3"/><rect x="21.97" y="130.56" width="4.45" height="1.050" fill="#a9a9a9"/><rect x="15.5" y="132.14" width="4.62" height="1.050" fill="#a9a9a9"/><rect x="22.15" y="132.14" width="10.23" height="1" fill="#77705a" opacity=".7"/><rect x="15.5" y="133.72" width="2.38" height="1.050" fill="#b58a4c"/><rect x="18.36" y="133.72" width="5.67" height="1.050" fill="#a0645c"/><rect x="15.5" y="135.3" width="5.44" height="1.050" fill="#a0645c"/><rect x="21.62" y="135.3" width="5.63" height="1.050" fill="#c2a95a"/><rect x="15.5" y="136.88" width="5.19" height="1.050" fill="#c9b46a"/><rect x="15.5" y="138.46" width="5.63" height="1.050" fill="#9c9c9c"/><rect x="15.5" y="140.04" width="5.2" height="1.050" fill="#9c9c9c"/><rect x="21.43" y="140.04" width="3.89" height="1.050" fill="#b58a4c"/><rect x="7.6" y="149.52" width="3.23" height="1.050" fill="#c9b46a"/><rect x="11.61" y="149.52" width="5.29" height="1.050" fill="#a9a9a9"/><rect x="5" y="151.1" width="5.39" height="1.050" fill="#c9b46a"/><rect x="3" y="152.68" width="2.89" height="1.050" fill="#c2a95a"/><rect x="3" y="154.26" width="3.99" height="1.050" fill="#a9a9a9"/><rect x="7.71" y="154.26" width="6.1" height="1.050" fill="#a9a9a9"/><rect x="5.6" y="155.84" width="4.18" height="1.050" fill="#a0645c"/><rect x="10.91" y="155.84" width="3.54" height="1.050" fill="#9c9c9c"/><rect x="3" y="157.42" width="5.61" height="1.050" fill="#a0645c"/><rect x="9.79" y="157.42" width="5.58" height="1.050" fill="#a9a9a9"/><rect x="17.39" y="157.42" width="22.86" height="1" fill="#77705a" opacity=".7"/><rect x="3" y="159" width="6.07" height="1.050" fill="#8f8f8f"/><rect x="10.11" y="159" width="5.21" height="1.050" fill="#b58a4c"/><rect x="16.05" y="159" width="5.47" height="1.050" fill="#b58a4c"/><rect x="5.6" y="160.58" width="4.32" height="1.050" fill="#c9b46a"/><rect x="10.44" y="160.58" width="5.47" height="1.050" fill="#c9b46a"/><rect x="3" y="162.16" width="2.37" height="1.050" fill="#a9a9a9"/><rect x="6.26" y="162.16" width="4.38" height="1.050" fill="#8f8f8f"/><rect x="12.59" y="162.16" width="20.23" height="1" fill="#77705a" opacity=".7"/><rect x="5.6" y="163.74" width="2.09" height="1.050" fill="#6483a3"/><rect x="8.42" y="163.74" width="6.13" height="1.050" fill="#9c9c9c"/><rect x="3" y="165.32" width="4.37" height="1.050" fill="#b58a4c"/><rect x="8.52" y="165.32" width="6.34" height="1.050" fill="#c2a95a"/><rect x="15.51" y="165.32" width="2.34" height="1.050" fill="#a9a9a9"/><rect x="3" y="166.9" width="5.09" height="1.050" fill="#9c9c9c"/><rect x="5" y="174.8" width="3.07" height="1.050" fill="#9c9c9c"/><rect x="8.84" y="174.8" width="2.05" height="1.050" fill="#6483a3"/><rect x="12" y="174.8" width="2.68" height="1.050" fill="#a0645c"/><rect x="5" y="176.38" width="4.5" height="1.050" fill="#9c9c9c"/><rect x="10.11" y="176.38" width="2.9" height="1.050" fill="#9c9c9c"/><rect x="13.67" y="176.38" width="6.25" height="1.050" fill="#8f8f8f"/><rect x="5" y="177.96" width="2.46" height="1.050" fill="#9c9c9c"/><rect x="6.1" y="184.28" width="4.67" height="1.050" fill="#9c9c9c"/><rect x="11.25" y="184.28" width="2.15" height="1.050" fill="#9c9c9c"/><rect x="14.14" y="184.28" width="5.47" height="1.050" fill="#c2a95a"/><rect x="8.7" y="185.86" width="5.45" height="1.050" fill="#a0645c"/><rect x="14.94" y="185.86" width="6.15" height="1.050" fill="#c9b46a"/><rect x="11.3" y="187.44" width="4.97" height="1.050" fill="#c9b46a"/><rect x="16.88" y="187.44" width="2.85" height="1.050" fill="#a9a9a9"/><rect x="21.65" y="187.44" width="14.66" height="1" fill="#77705a" opacity=".7"/><rect x="13.9" y="189.02" width="5.71" height="1.050" fill="#b58a4c"/><rect x="20.22" y="189.02" width="4.42" height="1.050" fill="#a9a9a9"/><rect x="15.5" y="190.6" width="4.58" height="1.050" fill="#6483a3"/><rect x="21.27" y="190.6" width="4.32" height="1.050" fill="#6483a3"/><rect x="27.45" y="190.6" width="18.89" height="1" fill="#77705a" opacity=".7"/><rect x="15.5" y="192.18" width="3.1" height="1.050" fill="#a0645c"/><rect x="19.56" y="192.18" width="3.48" height="1.050" fill="#c2a95a"/><rect x="15.5" y="193.76" width="3.07" height="1.050" fill="#9c9c9c"/><rect x="19.42" y="193.76" width="3.19" height="1.050" fill="#c2a95a"/><rect x="24.49" y="193.76" width="21.37" height="1" fill="#77705a" opacity=".7"/><rect x="3" y="198.5" width="5.74" height="1.050" fill="#b58a4c"/><rect x="9.62" y="198.5" width="5.65" height="1.050" fill="#8f8f8f"/><rect x="3" y="200.08" width="3.38" height="1.050" fill="#a0645c"/><rect x="7.28" y="200.08" width="4.88" height="1.050" fill="#c9b46a"/><rect x="3" y="201.66" width="2.53" height="1.050" fill="#a0645c"/><rect x="6.07" y="201.66" width="4.34" height="1.050" fill="#a9a9a9"/><rect x="11.01" y="201.66" width="6.19" height="1.050" fill="#c9b46a"/><rect x="19.11" y="201.66" width="19.06" height="1" fill="#77705a" opacity=".7"/><rect x="3" y="203.24" width="4.7" height="1.050" fill="#8f8f8f"/><rect x="8.38" y="203.24" width="6.04" height="1.050" fill="#a0645c"/><rect x="15.41" y="203.24" width="4.19" height="1.050" fill="#8f8f8f"/><rect x="5.6" y="204.82" width="2.53" height="1.050" fill="#9c9c9c"/><rect x="9.25" y="204.82" width="4.37" height="1.050" fill="#a0645c"/><rect x="14.36" y="204.82" width="2.11" height="1.050" fill="#c9b46a"/><rect x="8.2" y="206.4" width="4.69" height="1.050" fill="#a9a9a9"/><rect x="13.99" y="206.4" width="5.95" height="1.050" fill="#6483a3"/><rect x="20.44" y="206.4" width="4.01" height="1.050" fill="#a0645c"/><rect x="5.6" y="207.98" width="4.45" height="1.050" fill="#a0645c"/><rect x="11.2" y="207.98" width="5.96" height="1.050" fill="#c2a95a"/><rect x="5.6" y="209.56" width="4.92" height="1.050" fill="#a0645c"/><rect x="11.38" y="209.56" width="6.07" height="1.050" fill="#9c9c9c"/><rect x="19.26" y="209.56" width="22.23" height="1" fill="#77705a" opacity=".7"/><rect x="8.2" y="211.14" width="2" height="1.050" fill="#6483a3"/><rect x="11.19" y="211.14" width="2.11" height="1.050" fill="#b58a4c"/><rect x="13.74" y="211.14" width="6.03" height="1.050" fill="#a0645c"/><rect x="5.6" y="212.72" width="2.14" height="1.050" fill="#c2a95a"/><rect x="8.39" y="212.72" width="4.24" height="1.050" fill="#8f8f8f"/><rect x="5.6" y="214.3" width="2.88" height="1.050" fill="#c2a95a"/><rect x="10.6" y="214.3" width="18.53" height="1" fill="#77705a" opacity=".7"/><rect x="5.6" y="215.88" width="4.4" height="1.050" fill="#6483a3"/><rect x="10.55" y="215.88" width="5.96" height="1.050" fill="#c9b46a"/><rect x="5.6" y="217.46" width="5.91" height="1.050" fill="#b58a4c"/><rect x="12.18" y="217.46" width="6.31" height="1.050" fill="#8f8f8f"/><rect x="5.6" y="219.04" width="5.2" height="1.050" fill="#6483a3"/><rect x="8.2" y="220.62" width="5.56" height="1.050" fill="#c2a95a"/><rect x="14.8" y="220.62" width="4.36" height="1.050" fill="#9c9c9c"/><rect x="10.8" y="222.2" width="5" height="1.050" fill="#a9a9a9"/><rect x="16.31" y="222.2" width="5.01" height="1.050" fill="#8f8f8f"/><rect x="13.4" y="223.78" width="2.03" height="1.050" fill="#a9a9a9"/><rect x="15.5" y="225.36" width="3.28" height="1.050" fill="#6483a3"/><rect x="19.38" y="225.36" width="3.26" height="1.050" fill="#c9b46a"/><rect x="15.5" y="226.94" width="4.8" height="1.050" fill="#a0645c"/><rect x="12.9" y="228.52" width="4.5" height="1.050" fill="#c2a95a"/><rect x="10.3" y="230.1" width="4.28" height="1.050" fill="#b58a4c"/><rect x="15.45" y="230.1" width="5.47" height="1.050" fill="#9c9c9c"/><rect x="12.9" y="231.68" width="5.54" height="1.050" fill="#6483a3"/><rect x="19.05" y="231.68" width="4.45" height="1.050" fill="#8f8f8f"/><rect x="5" y="236.42" width="3.46" height="1.050" fill="#c9b46a"/><rect x="9.35" y="236.42" width="5.63" height="1.050" fill="#8f8f8f"/><rect x="3" y="238" width="6.08" height="1.050" fill="#6483a3"/><rect x="10.98" y="238" width="15.38" height="1" fill="#77705a" opacity=".7"/><rect x="3" y="239.58" width="5.44" height="1.050" fill="#8f8f8f"/><rect x="8.91" y="239.58" width="5.69" height="1.050" fill="#b58a4c"/><rect x="5.6" y="241.16" width="2.28" height="1.050" fill="#a0645c"/><rect x="8.65" y="241.16" width="5.14" height="1.050" fill="#c9b46a"/><rect x="14.3" y="241.16" width="5.4" height="1.050" fill="#b58a4c"/><rect x="5.6" y="242.74" width="2.02" height="1.050" fill="#a0645c"/><rect x="8.2" y="244.32" width="4.12" height="1.050" fill="#9c9c9c"/><rect x="13.5" y="244.32" width="5.06" height="1.050" fill="#6483a3"/><rect x="20.2" y="244.32" width="21.83" height="1" fill="#77705a" opacity=".7"/><rect x="10.8" y="245.9" width="6.2" height="1.050" fill="#c2a95a"/><rect x="10.8" y="247.48" width="2.18" height="1.050" fill="#a0645c"/><rect x="13.85" y="247.48" width="6.48" height="1.050" fill="#c2a95a"/></g></svg>
<div style="left:989.6px;top:68px;width:10.4px;height:269px;background:#2f2f31;"></div>
<div style="left:978px;top:278.8px;width:22px;height:0.8px;background:#5e5e5e;"></div>
<div style="left:480px;top:336.4px;width:520px;height:24.6px;background:#28282a;border-top:1px solid #454547;"></div>
<svg class="c" style="left:495.6px;top:343.54px;width:26.8px;height:11.31px;fill:#f0f0f0;" viewBox="0 -1030 3080.46 1300" role="img" aria-label="调试器"><text x="-5.75" y="0" font-size="1000" letter-spacing="-11.5">调试器</text></svg>
<div style="left:495.6px;top:358px;width:25.8px;height:1px;background:#e0e0e0;"></div>
<svg class="c" style="left:537px;top:343.54px;width:18.6px;height:11.31px;fill:#8f8f8f;" viewBox="0 -1030 2137.93 1300" role="img" aria-label="问题"><text x="5.75" y="0" font-size="1000" letter-spacing="11.5">问题</text></svg>
<svg class="c" style="left:570.8px;top:343.54px;width:18.6px;height:11.31px;fill:#8f8f8f;" viewBox="0 -1030 2137.93 1300" role="img" aria-label="输出"><text x="5.75" y="0" font-size="1000" letter-spacing="11.5">输出</text></svg>
<svg class="c" style="left:603.6px;top:343.54px;width:18.6px;height:11.31px;fill:#8f8f8f;" viewBox="0 -1030 2137.93 1300" role="img" aria-label="终端"><text x="5.75" y="0" font-size="1000" letter-spacing="11.5">终端</text></svg>
<svg class="c" style="left:948.4px;top:346.6px;width:10px;height:6.4px;" viewBox="0 0 10 6.4"><path d="M.8 5.400l4.200-4.300 4.200 4.300" fill="none" stroke="#d0d0d0" stroke-width="1.1"/></svg>
<svg class="c" style="left:974.4px;top:345.6px;width:8.4px;height:8.4px;" viewBox="0 0 8.4 8.4"><path d="M.8 .8l6.800 6.800M7.600 .8L.8 7.600" fill="none" stroke="#d0d0d0" stroke-width="1.1"/></svg>
<div style="left:480px;top:360.6px;width:520px;height:20.6px;background:#333333;"></div>
<div style="left:480px;top:381.2px;width:520px;height:18.8px;background:#333333;border-top:0.8px solid #474747;"></div>
<svg class="c" style="left:488px;top:364.8px;width:12px;height:12px;" viewBox="0 0 12 12"><path d="M9.600 4.400V1.200H.8v8.800h3.400" fill="none" stroke="#b0b0b0" stroke-width="1.1" stroke-dasharray="1.600 .9"/><path d="M5.200 4.800l5.600 2.200-2.400 1 1.800 2.400-1 .8-1.800-2.500-1.600 1.900z" fill="#d0d0d0"/></svg>
<span class="t" style="left:521.4px;top:365px;font-size:9.2px;line-height:13px;color:#e2e2e2;letter-spacing:0.15px;">Wxml</span>
<div style="left:555px;top:360.6px;width:52.2px;height:20.6px;background:#000;"></div>
<span class="t" style="left:564.4px;top:365px;font-size:9.2px;line-height:13px;color:#ffffff;letter-spacing:-0.08px;">Console</span>
<span class="t" style="left:616.4px;top:365px;font-size:9.2px;line-height:13px;color:#e2e2e2;letter-spacing:-0.19px;">Sources</span>
<span class="t" style="left:667.8px;top:365px;font-size:9.2px;line-height:13px;color:#e2e2e2;letter-spacing:0.21px;">Network</span>
<span class="t" style="left:722.4px;top:365px;font-size:9.2px;line-height:13px;color:#e2e2e2;letter-spacing:0.23px;">Memory</span>
<span class="t" style="left:776.6px;top:365px;font-size:9.2px;line-height:13px;color:#e2e2e2;letter-spacing:0.06px;">AppData</span>
<svg class="c" style="left:828.6px;top:367.2px;width:8px;height:7px;" viewBox="0 0 8 7"><path d="M.8 .8l2.800 2.700L.8 6.200M4.400 .8l2.800 2.700-2.800 2.700" fill="none" stroke="#c0c0c0" stroke-width="1"/></svg>
<svg class="c" style="left:886.6px;top:366.9px;width:9.2px;height:8.4px;" viewBox="0 0 9.2 8.4"><path d="M4.600 .500l4.100 7.300H.5z" fill="#f4bd00" stroke="#f4bd00" stroke-width=".8" stroke-linejoin="round"/><path d="M4.600 3v2.600" stroke="#4a3a00" stroke-width="1"/><circle cx="4.600" cy="6.700" r=".55" fill="#4a3a00"/></svg>
<span class="t" style="left:898.4px;top:365px;font-size:9.4px;line-height:13px;color:#e2e2e2;">8</span>
<svg class="c" style="left:906.2px;top:366.4px;width:9.6px;height:8.6px;" viewBox="0 0 9.6 8.6"><path d="M.6 .600h8.400v5.800H4.200L2.200 8V6.400H.6z" fill="#2f86e8"/><path d="M2.200 2.500h5M2.200 4.300h3.400" stroke="#bcd9ff" stroke-width=".8"/></svg>
<span class="t" style="left:918.2px;top:365px;font-size:9.4px;line-height:13px;color:#e2e2e2;">1</span>
<div style="left:928.8px;top:364.4px;width:0.8px;height:13px;background:#4d4d4d;"></div>
<svg class="c" style="left:937.4px;top:364.6px;width:12px;height:12px;" viewBox="0 0 12 12"><g transform="translate(6 6)" fill="#b8b8b8"><rect x="-1.150" y="-5.5" width="2.300" height="2.600" transform="rotate(0)"/><rect x="-1.150" y="-5.5" width="2.300" height="2.600" transform="rotate(45)"/><rect x="-1.150" y="-5.5" width="2.300" height="2.600" transform="rotate(90)"/><rect x="-1.150" y="-5.5" width="2.300" height="2.600" transform="rotate(135)"/><rect x="-1.150" y="-5.5" width="2.300" height="2.600" transform="rotate(180)"/><rect x="-1.150" y="-5.5" width="2.300" height="2.600" transform="rotate(225)"/><rect x="-1.150" y="-5.5" width="2.300" height="2.600" transform="rotate(270)"/><rect x="-1.150" y="-5.5" width="2.300" height="2.600" transform="rotate(315)"/><circle r="3.9999999999999996"/></g><circle cx="6" cy="6" r="1.700" fill="#333"/></svg>
<div style="left:965.4px;top:366.6px;width:1.7px;height:1.7px;background:#b8b8b8;border-radius:50%;"></div>
<div style="left:965.4px;top:370px;width:1.7px;height:1.7px;background:#b8b8b8;border-radius:50%;"></div>
<div style="left:965.4px;top:373.4px;width:1.7px;height:1.7px;background:#b8b8b8;border-radius:50%;"></div>
<svg class="c" style="left:980.6px;top:365.4px;width:13px;height:11px;" viewBox="0 0 13 11"><rect x="3.400" y=".8" width="8.800" height="6.800" fill="none" stroke="#9a9a9a" stroke-width="1.300"/><path d="M1 3.400v6.800h8.800" fill="none" stroke="#9a9a9a" stroke-width="1.300"/></svg>
<svg class="c" style="left:485.8px;top:386.9px;width:11.6px;height:10.4px;" viewBox="0 0 11.6 10.4"><rect x=".6" y=".6" width="10.400" height="9.200" fill="none" stroke="#b0b0b0" stroke-width="1.100"/><path d="M3 .600v9.200" stroke="#b0b0b0" stroke-width="1"/><path d="M5 2.900l3.600 2.300L5 7.500z" fill="#b0b0b0"/></svg>
<svg class="c" style="left:509.6px;top:386.7px;width:11px;height:11px;" viewBox="0 0 11 11"><circle cx="5.500" cy="5.500" r="4.500" fill="none" stroke="#b0b0b0" stroke-width="1.300"/><path d="M2.300 2.300l6.400 6.400" stroke="#b0b0b0" stroke-width="1.300"/></svg>
<span class="t" style="left:536.6px;top:386px;font-size:9.2px;line-height:13px;color:#e2e2e2;letter-spacing:-0.01px;">appservice</span>
<div style="left:632.4px;top:390.5px;width:0;height:0;border-left:3.100px solid transparent;border-right:3.100px solid transparent;border-top:4.200px solid #a0a0a0"></div>
<div style="left:645.4px;top:385.6px;width:0.8px;height:13px;background:#4d4d4d;"></div>
<svg class="c" style="left:653.6px;top:387.5px;width:13px;height:9.4px;" viewBox="0 0 13 9.4"><path d="M.6 4.700C2.600 1.700 4.600.600 6.500.600s3.900 1.100 5.900 4.100c-2 3-4 4.100-5.900 4.100S2.600 7.700.600 4.700z" fill="#b4b4b4"/><circle cx="6.500" cy="4.700" r="2.100" fill="#333"/><circle cx="6.500" cy="4.700" r="1" fill="#b4b4b4"/></svg>
<div style="left:680.2px;top:384.4px;width:109px;height:15.2px;background:#242424;border:0.8px solid #5a5a5a;"></div>
<span class="t" style="left:684px;top:386px;font-size:9.2px;line-height:13px;color:#e2e2e2;letter-spacing:-0.14px;">Filter</span>
<span class="t" style="left:796.4px;top:386px;font-size:9.2px;line-height:13px;color:#e2e2e2;letter-spacing:0.06px;">Default levels</span>
<div style="left:855.8px;top:390.5px;width:0;height:0;border-left:3.100px solid transparent;border-right:3.100px solid transparent;border-top:4.200px solid #a0a0a0"></div>
<div style="left:926.8px;top:385.6px;width:0.8px;height:13px;background:#4d4d4d;"></div>
<span class="t" style="left:935.4px;top:386px;font-size:9.2px;line-height:13px;color:#9a9a9a;letter-spacing:0.16px;">8 hidden</span>
<svg class="c" style="left:981.2px;top:385.9px;width:12px;height:12px;" viewBox="0 0 12 12"><g transform="translate(6 6)" fill="#b8b8b8"><rect x="-1.150" y="-5.5" width="2.300" height="2.600" transform="rotate(0)"/><rect x="-1.150" y="-5.5" width="2.300" height="2.600" transform="rotate(45)"/><rect x="-1.150" y="-5.5" width="2.300" height="2.600" transform="rotate(90)"/><rect x="-1.150" y="-5.5" width="2.300" height="2.600" transform="rotate(135)"/><rect x="-1.150" y="-5.5" width="2.300" height="2.600" transform="rotate(180)"/><rect x="-1.150" y="-5.5" width="2.300" height="2.600" transform="rotate(225)"/><rect x="-1.150" y="-5.5" width="2.300" height="2.600" transform="rotate(270)"/><rect x="-1.150" y="-5.5" width="2.300" height="2.600" transform="rotate(315)"/><circle r="3.9999999999999996"/></g><circle cx="6" cy="6" r="1.700" fill="#333"/></svg>
<div style="left:480px;top:400px;width:509.4px;height:155.4px;background:#332b00;overflow:hidden;"></div>
<div style="left:480px;top:420.2px;width:509.4px;height:0.8px;background:#5c4e00;"></div>
<div style="left:480px;top:448.8px;width:509.4px;height:0.8px;background:#5c4e00;"></div>
<div style="left:480px;top:555.4px;width:520px;height:7px;background:#242424;"></div>
<div style="left:989.4px;top:400px;width:10.6px;height:162px;background:#2c2c2c;"></div>
<div style="left:989.4px;top:475px;width:10.6px;height:81px;background:#454545;"></div>
<div style="left:480px;top:400px;width:509.4px;height:12px;overflow:hidden;">
<div style="left:4.6px;top:-1.6px;width:8.8px;height:3.4px;background:#f4bd00;border-radius:0 0 1px 1px;"></div>
<span class="m" style="left:27.15px;top:-4.300px;font-size:8.7px;line-height:12px;color:#f1ead2;font-weight:700;">[Component] the type of property "isBack" is illegal (when</span>
<span class="m" style="left:383.4px;top:-4.300px;font-size:8.7px;line-height:12px;color:#f1ead2;font-weight:700;text-decoration:underline;">VM108 WAService.js:2</span>
</div>
<div style="left:500.8px;top:399.600px;width:0;height:0;border-top:1.800px solid transparent;border-bottom:1.800px solid transparent;border-left:3.200px solid #8c8467"></div>
<span class="m" style="left:498.8px;top:409px;font-size:8.7px;line-height:12px;color:#f1ead2;font-weight:700;">preparing behavior "colorui/components/cu-custom").</span>
<svg class="c" style="left:484.4px;top:424.6px;width:9.2px;height:8.4px;" viewBox="0 0 9.2 8.4"><path d="M4.600 .500l4.100 7.300H.5z" fill="#f4bd00" stroke="#f4bd00" stroke-width=".8" stroke-linejoin="round"/><path d="M4.600 3v2.600" stroke="#4a3a00" stroke-width="1"/><circle cx="4.600" cy="6.700" r=".55" fill="#4a3a00"/></svg>
<div style="left:500.800px;top:427.600px;width:0;height:0;border-top:2.400px solid transparent;border-bottom:2.400px solid transparent;border-left:3.600px solid #9c9478"></div>
<span class="m" style="left:506.6px;top:425px;font-size:8.7px;line-height:12px;color:#f1ead2;font-weight:700;">WXMLRT_$gwx:./pages/index/index.wxml:view:2:6: wx:key="" does not look like a</span>
<span class="m" style="left:924.6px;top:426px;font-size:8.7px;line-height:12px;color:#f1ead2;font-weight:700;text-decoration:underline;">VM307:18</span>
<span class="m" style="left:498.8px;top:436px;font-size:8.7px;line-height:12px;color:#f1ead2;font-weight:700;">valid key name.</span>
<svg class="c" style="left:484.4px;top:452.2px;width:9.2px;height:8.4px;" viewBox="0 0 9.2 8.4"><path d="M4.600 .500l4.100 7.300H.5z" fill="#f4bd00" stroke="#f4bd00" stroke-width=".8" stroke-linejoin="round"/><path d="M4.600 3v2.600" stroke="#4a3a00" stroke-width="1"/><circle cx="4.600" cy="6.700" r=".55" fill="#4a3a00"/></svg>
<span class="m" style="left:498.8px;top:452px;font-size:8.7px;line-height:12px;color:#f1ead2;font-weight:700;">[WXML Runtime warning] ./pages/index/index.wxml</span>
<span class="m" style="left:504.02px;top:463px;font-size:8.7px;line-height:12px;color:#f1ead2;font-weight:700;">wx:key="" does not look like a valid key name.</span>
<span class="m" style="left:509.24px;top:475px;font-size:8.7px;line-height:12px;color:#f1ead2;font-weight:700;">1 | &lt;view class="cu-list grid col-{{gridCol}} {{gridBorder?'':''}}"&gt;</span>
<span class="m" style="left:498.8px;top:486px;font-size:8.7px;line-height:12px;color:#f1ead2;font-weight:700;">&gt; 2 |     &lt;view class="cu-item bg-gray" wx:for="{{iconList}}" wx:key wx:if="</span>
<span class="m" style="left:498.8px;top:498px;font-size:8.7px;line-height:12px;color:#f1ead2;font-weight:700;">{{index&lt;gridCol*2}}"&gt;</span>
<span class="m" style="left:519.68px;top:509px;font-size:8.7px;line-height:12px;color:#f1ead2;font-weight:700;">|       ^</span>
<span class="m" style="left:509.24px;top:520px;font-size:8.7px;line-height:12px;color:#f1ead2;font-weight:700;">3 |       &lt;navigator open-type="navigate" url="{{item.to}}" hover-class="none"&gt;</span>
<span class="m" style="left:509.24px;top:532px;font-size:8.7px;line-height:12px;color:#f1ead2;font-weight:700;">4 |       &lt;view class=""&gt;</span>
<span class="m" style="left:509.24px;top:543px;font-size:8.7px;line-height:12px;color:#f1ead2;font-weight:700;">5 | </span>
<svg class="c" style="left:485.6px;top:557.4px;width:5px;height:6px;" viewBox="0 0 5 6"><path d="M.8 .600l3 2.400-3 2.400" fill="none" stroke="#3b82f6" stroke-width="1.200"/></svg>
</div></body></html>
